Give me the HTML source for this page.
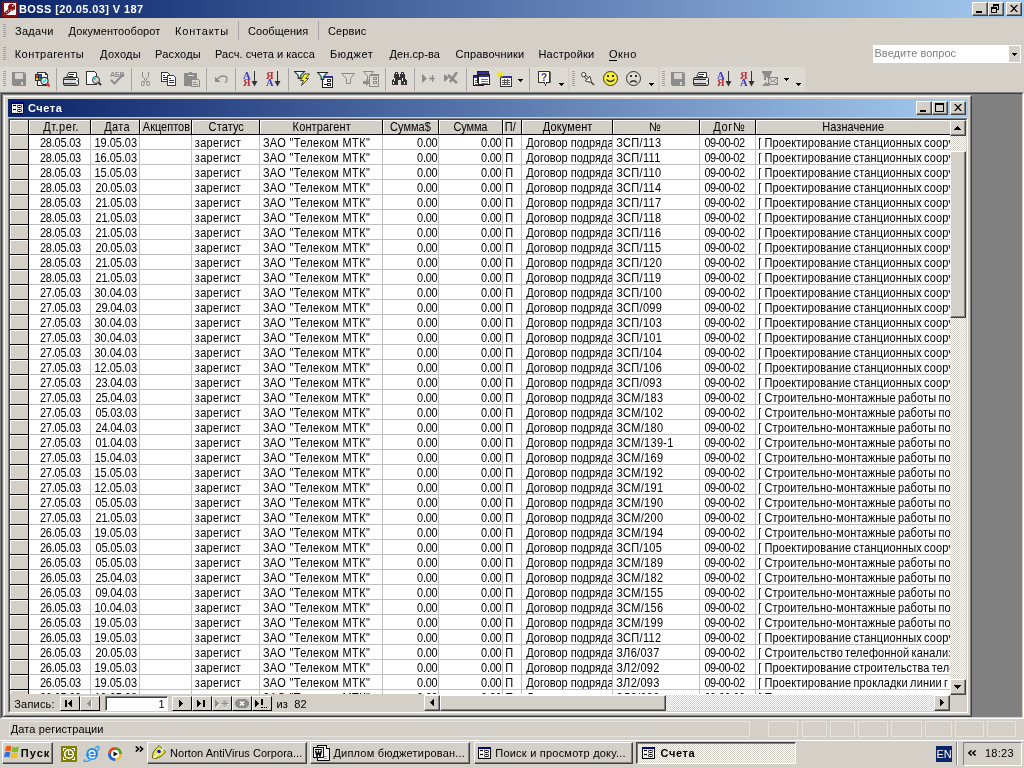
<!DOCTYPE html>
<html><head><meta charset="utf-8"><title>BOSS</title>
<style>
*{box-sizing:border-box}
html,body{margin:0;padding:0}
body{will-change:transform;width:1024px;height:768px;overflow:hidden;position:relative;background:#D4D0C8;font-family:"Liberation Sans",sans-serif;font-size:11px;color:#000}
.a{position:absolute}
.t{position:absolute;white-space:pre;line-height:13px}
.tb{background:linear-gradient(to right,#0A246A,#A6CAF0)}
.btn{position:absolute;background:#D4D0C8;border-style:solid;border-width:1px;border-color:#FFF #404040 #404040 #FFF;box-shadow:inset -1px -1px 0 #808080}
.dith{background-color:#D4D0C8;background-image:linear-gradient(45deg,#FFF 25%,transparent 25%,transparent 75%,#FFF 75%),linear-gradient(45deg,#FFF 25%,transparent 25%,transparent 75%,#FFF 75%);background-size:2px 2px;background-position:0 0,1px 1px}
.grip{position:absolute;width:3px;background:repeating-linear-gradient(to bottom,#A0A0A0 0,#A0A0A0 1px,transparent 1px,transparent 2px)}
.sepv{position:absolute;width:1px;background:#A6A6A6}
.sepw{position:absolute;width:2px;border-left:1px solid #808080;border-right:1px solid #FFF}
.tbar{position:absolute;top:67px;height:24px;background:#DDDAD3;border-radius:0 3px 3px 0}
.clip{position:absolute;overflow:hidden}
.hl{position:absolute;background:#FFF}
.bk{position:absolute;background:#000}
.gl{position:absolute;background:#C0C0C0}
.sy{transform:scaleY(1.13);transform-origin:0 3px}
.sy2{transform:scaleY(1.13);transform-origin:0 11px}
</style></head><body>

<div class="a tb" style="left:0;top:0;width:1024px;height:18px"></div>
<svg class="a" style="left:2px;top:1px;" width="16" height="16" viewBox="0 0 16 16" shape-rendering="crispEdges"><defs><pattern id="chk" width="2" height="2" patternUnits="userSpaceOnUse"><rect width="2" height="2" fill="#800000"/><rect width="1" height="1" fill="#9000A0"/><rect x="1" y="1" width="1" height="1" fill="#9000A0"/></pattern></defs><rect x="0" y="0" width="16" height="16" fill="url(#chk)"/><rect x="2" y="2" width="12" height="12" fill="#FFF"/><circle cx="9.6" cy="6.3" r="3.5" fill="url(#chk)" shape-rendering="auto"/><path d="M8.5 8.5L3.5 12.5" stroke="url(#chk)" stroke-width="3.2" stroke-linecap="round" shape-rendering="auto"/><path d="M4 12L7.5 9.3M8.5 9H11.5" stroke="#FFF" stroke-width="0.9" stroke-dasharray="1.5 1" shape-rendering="auto"/><rect x="10" y="4" width="1.5" height="1.5" fill="#FFF" shape-rendering="auto"/></svg>
<div class="t" style="left:19.00px;top:3px;line-height:13px;color:#FFF;font-weight:bold;letter-spacing:0.400px;">BOSS [20.05.03] V 187</div>
<div class="btn" style="left:972px;top:2px;width:16px;height:14px"></div><div class="a" style="left:976px;top:11px;width:6px;height:2px;background:#000"></div>
<div class="btn" style="left:988px;top:2px;width:16px;height:14px"></div><div class="a" style="left:993px;top:4px;width:6px;height:6px;border:1px solid #000;border-top-width:2px"></div><div class="a" style="left:991px;top:7px;width:6px;height:6px;border:1px solid #000;border-top-width:2px;background:#D4D0C8"></div>
<div class="btn" style="left:1006px;top:2px;width:16px;height:14px"></div><svg class="a" style="left:1010px;top:5px;" width="8" height="7" viewBox="0 0 8 7" shape-rendering="crispEdges"><path d="M0 0H1.6L4 2.6L6.4 0H8L4.8 3.5L8 7H6.4L4 4.4L1.6 7H0L3.2 3.5Z" fill="#000" shape-rendering="auto"/></svg>
<div class="grip" style="left:3px;top:24px;height:14px"></div>
<div class="t" style="left:15.00px;top:25px;line-height:13px;letter-spacing:0.300px;">Задачи</div>
<div class="t" style="left:68.60px;top:25px;line-height:13px;letter-spacing:0.100px;">Документооборот</div>
<div class="t" style="left:175.00px;top:25px;line-height:13px;letter-spacing:0.800px;">Контакты</div>
<div class="t" style="left:248.00px;top:25px;line-height:13px;letter-spacing:0.062px;">Сообщения</div>
<div class="t" style="left:328.00px;top:25px;line-height:13px;letter-spacing:0.120px;">Сервис</div>
<div class="sepv" style="left:238px;top:21px;height:19px"></div>
<div class="sepv" style="left:318px;top:21px;height:19px"></div>
<div class="grip" style="left:3px;top:47px;height:14px"></div>
<div class="t" style="left:14.75px;top:48px;line-height:13px;letter-spacing:0.425px;">Контрагенты</div>
<div class="t" style="left:100.00px;top:48px;line-height:13px;letter-spacing:0.320px;">Доходы</div>
<div class="t" style="left:155.00px;top:48px;line-height:13px;letter-spacing:0.267px;">Расходы</div>
<div class="t" style="left:215.00px;top:48px;line-height:13px;letter-spacing:0.056px;">Расч. счета и касса</div>
<div class="t" style="left:330.00px;top:48px;line-height:13px;letter-spacing:0.600px;">Бюджет</div>
<div class="t" style="left:389.60px;top:48px;line-height:13px;letter-spacing:0.050px;">Ден.ср-ва</div>
<div class="t" style="left:455.60px;top:48px;line-height:13px;letter-spacing:0.200px;">Справочники</div>
<div class="t" style="left:538.40px;top:48px;line-height:13px;letter-spacing:0.237px;">Настройки</div>
<div class="t" style="left:609.00px;top:48px;line-height:13px;letter-spacing:0.567px;">Окно</div>
<div class="a" style="left:609px;top:60px;width:8px;height:1px;background:#000"></div>
<div class="a" style="left:873px;top:45px;width:148px;height:18px;background:#FFF"></div>
<div class="t" style="left:874.50px;top:47px;line-height:13px;color:#808080;letter-spacing:0.038px;">Введите вопрос</div>
<div class="a" style="left:1009px;top:46px;width:11px;height:16px;background:#D4D0C8"></div>
<svg class="a" style="left:1012px;top:53px;" width="5" height="3" viewBox="0 0 5 3" shape-rendering="crispEdges"><path d="M0 0H5V1H4V2H3V3H2V2H1V1H0Z" fill="#000"/></svg>
<div class="tbar" style="left:0;width:568px"></div>
<div class="tbar" style="left:570px;width:88px"></div>
<div class="tbar" style="left:660px;width:145px"></div>
<div class="grip" style="left:3px;top:71px;height:16px"></div>
<div class="grip" style="left:572px;top:71px;height:16px"></div>
<div class="grip" style="left:662px;top:71px;height:16px"></div>
<div class="sepv" style="left:56px;top:68px;height:23px"></div>
<div class="sepv" style="left:131px;top:68px;height:23px"></div>
<div class="sepv" style="left:206px;top:68px;height:23px"></div>
<div class="sepv" style="left:235px;top:68px;height:23px"></div>
<div class="sepv" style="left:288px;top:68px;height:23px"></div>
<div class="sepv" style="left:385px;top:68px;height:23px"></div>
<div class="sepv" style="left:414px;top:68px;height:23px"></div>
<div class="sepv" style="left:466px;top:68px;height:23px"></div>
<div class="sepv" style="left:529px;top:68px;height:23px"></div>
<svg class="a" style="left:12px;top:72px;" width="14" height="14" viewBox="0 0 14 14" shape-rendering="crispEdges"><path d="M0 0H13V1H14V14H1V13H0Z" fill="#8C8C8C"/><rect x="3" y="1" width="8" height="6" fill="#D8D5CE"/><rect x="9" y="10" width="2" height="3" fill="#D8D5CE"/><rect x="12" y="1" width="1" height="1" fill="#D8D5CE"/></svg>
<svg class="a" style="left:34px;top:72px;" width="16" height="15" viewBox="0 0 16 15" shape-rendering="crispEdges"><path d="M3.5 0.5H11.5L13.5 2.5V13.5H3.5Z" fill="#FFF" stroke="#333"/><rect x="11" y="1" width="2" height="2" fill="#333"/><rect x="1" y="2" width="7" height="7" fill="#333"/><rect x="2" y="3" width="2" height="2" fill="#F03030"/><rect x="5" y="3" width="2" height="2" fill="#3050F0"/><rect x="2" y="6" width="2" height="2" fill="#F0F030"/><rect x="5" y="6" width="2" height="2" fill="#30A030"/><circle cx="10.5" cy="9" r="3.6" fill="#E8F8F8" stroke="#333" stroke-width="1.2" shape-rendering="auto"/><path d="M9 10.5L12 7.5" stroke="#20E8F8" stroke-width="2" shape-rendering="auto"/><path d="M13 11.5L15.5 14" stroke="#F03030" stroke-width="2.6" shape-rendering="auto"/></svg>
<svg class="a" style="left:63px;top:72px;" width="16" height="14" viewBox="0 0 16 14" shape-rendering="crispEdges"><path d="M5.5 0.5H13.5V5.5H3.5Z" fill="#FFF" stroke="#333" shape-rendering="auto"/><rect x="6" y="2" width="5" height="1" fill="#333"/><rect x="5" y="4" width="5" height="1" fill="#333"/><rect x="0.5" y="5.5" width="15" height="8" rx="1.5" fill="#A8A8A8" stroke="#333" shape-rendering="auto"/><rect x="1" y="8" width="13" height="3" fill="#E0E0E0"/><rect x="1" y="7" width="13" height="1" fill="#333"/><rect x="1" y="11" width="13" height="1" fill="#333"/><rect x="6" y="9" width="3" height="1" fill="#F0E000"/><rect x="13" y="6" width="2" height="2" fill="#FFF"/><rect x="13" y="10" width="2" height="2" fill="#FFF"/></svg>
<svg class="a" style="left:86px;top:71px;" width="16" height="15" viewBox="0 0 16 15" shape-rendering="crispEdges"><path d="M0.5 0.5H8.5L10.5 2.5V13.5H0.5Z" fill="#FFF" stroke="#333"/><circle cx="10" cy="9" r="3.5" fill="#D8D8D8" stroke="#333" shape-rendering="auto"/><rect x="8" y="7" width="2" height="2" fill="#30E0F0"/><rect x="10" y="10" width="2" height="1" fill="#30E0F0"/><path d="M12.5 11.5L15 14" stroke="#333" stroke-width="2" shape-rendering="auto"/></svg>
<svg class="a" style="left:110px;top:71px;" width="15" height="15" viewBox="0 0 15 15" shape-rendering="crispEdges"><text x="0" y="6" font-family="Liberation Sans" font-size="7" font-weight="bold" fill="#8C8C8C" letter-spacing="-0.3">АБВ</text><path d="M1 9L4.5 12.5L13.5 3" stroke="#8C8C8C" stroke-width="2" fill="none" shape-rendering="auto"/></svg>
<svg class="a" style="left:141px;top:72px;" width="9" height="15" viewBox="0 0 9 15" shape-rendering="crispEdges"><path d="M1.5 0V4L4.5 8.5L7.5 4V0" stroke="#8C8C8C" fill="none"/><ellipse cx="1.8" cy="11.5" rx="1.5" ry="2.2" fill="none" stroke="#8C8C8C" shape-rendering="auto"/><ellipse cx="7.2" cy="11.5" rx="1.5" ry="2.2" fill="none" stroke="#8C8C8C" shape-rendering="auto"/><path d="M4.5 8.5L2.5 10M4.5 8.5L6.5 10" stroke="#8C8C8C"/></svg>
<svg class="a" style="left:161px;top:72px;" width="15" height="14" viewBox="0 0 15 14" shape-rendering="crispEdges"><path d="M0.5 0.5H6.5L8.5 2.5V9.5H0.5Z" fill="#FFF" stroke="#333"/><rect x="2" y="3" width="2" height="1" fill="#333"/><rect x="2" y="5" width="4" height="1" fill="#333"/><rect x="2" y="7" width="4" height="1" fill="#333"/><path d="M6.5 3.5H12.5L14.5 5.5V13.5H6.5Z" fill="#FFF" stroke="#3030A0"/><rect x="8" y="6" width="2" height="1" fill="#333"/><rect x="8" y="8" width="5" height="1" fill="#333"/><rect x="8" y="10" width="5" height="1" fill="#333"/></svg>
<svg class="a" style="left:184px;top:72px;" width="16" height="15" viewBox="0 0 16 15" shape-rendering="crispEdges"><rect x="0" y="1" width="13" height="13" rx="1" fill="#8C8C8C"/><rect x="5" y="0" width="3" height="2" fill="#8C8C8C"/><rect x="4" y="3" width="6" height="1" fill="#E0DDD6"/><path d="M7.5 7.5H14.5L15.5 8.5V14.5H7.5Z" fill="#D8D5CE" stroke="#8C8C8C"/><rect x="9" y="10" width="3" height="1" fill="#8C8C8C"/><rect x="9" y="12" width="5" height="1" fill="#8C8C8C"/></svg>
<svg class="a" style="left:215px;top:75px;" width="13" height="8" viewBox="0 0 13 8" shape-rendering="crispEdges"><path d="M0 2V7H5Z" fill="#8C8C8C"/><path d="M2.5 4.5C4 2 6 1 8.5 1C11 1 12 3 12 4.5C12 6 11 7 10 7.5" stroke="#8C8C8C" stroke-width="1.3" fill="none" shape-rendering="auto"/></svg>
<svg class="a" style="left:243px;top:71px;" width="15" height="16" viewBox="0 0 15 16" shape-rendering="crispEdges"><text x="3.8" y="7.6" text-anchor="middle" font-family="Liberation Serif" font-size="10.5" font-weight="bold" fill="#3838C0" shape-rendering="auto">A</text><text x="3.8" y="15.2" text-anchor="middle" font-family="Liberation Serif" font-size="10.5" font-weight="bold" fill="#B83030" shape-rendering="auto">Я</text><rect x="11" y="0" width="1" height="12" fill="#333"/><path d="M8.5 10H14.5L11.5 15.5Z" fill="#333" shape-rendering="auto"/></svg>
<svg class="a" style="left:266px;top:71px;" width="15" height="16" viewBox="0 0 15 16" shape-rendering="crispEdges"><text x="3.8" y="7.6" text-anchor="middle" font-family="Liberation Serif" font-size="10.5" font-weight="bold" fill="#B83030" shape-rendering="auto">Я</text><text x="3.8" y="15.2" text-anchor="middle" font-family="Liberation Serif" font-size="10.5" font-weight="bold" fill="#3838C0" shape-rendering="auto">A</text><rect x="11" y="0" width="1" height="12" fill="#333"/><path d="M8.5 10H14.5L11.5 15.5Z" fill="#333" shape-rendering="auto"/></svg>
<svg class="a" style="left:294px;top:71px;" width="16" height="16" viewBox="0 0 16 16" shape-rendering="crispEdges"><path d="M0.5 0.5H10.5L6.8 4.5V7.5H4.2V4.5Z" fill="#FFF" stroke="#222" stroke-width="1.1" shape-rendering="auto"/><path d="M2 1.3L4.6 4.3M9 1.3L6.4 4.3M5.5 5.5V7" stroke="#28B0B0" stroke-width="1" shape-rendering="auto"/><path d="M10.5 3H15.5L11.5 7.5H14.5L7.5 14.5L9.5 9.5H6.5Z" fill="#F8F020" stroke="#222" stroke-width="0.8" shape-rendering="auto"/></svg>
<svg class="a" style="left:317px;top:72px;" width="17" height="17" viewBox="0 0 17 17" shape-rendering="crispEdges"><rect x="5.5" y="4.5" width="10" height="11" fill="#FFF" stroke="#222"/><rect x="5" y="4" width="11" height="2" fill="#3030A0"/><rect x="10.5" y="7.5" width="3" height="2" fill="none" stroke="#222"/><rect x="10.5" y="11.5" width="3" height="2" fill="none" stroke="#222"/><rect x="7" y="12" width="3" height="1" fill="#222"/><path d="M0.5 0.5H10.5L6.8 4.5V7.5H4.2V4.5Z" fill="#FFF" stroke="#222" stroke-width="1.1" shape-rendering="auto"/><path d="M2 1.3L4.6 4.3M9 1.3L6.4 4.3M5.5 5.5V7" stroke="#28B0B0" stroke-width="1" shape-rendering="auto"/></svg>
<svg class="a" style="left:341px;top:73px;" width="15" height="12" viewBox="0 0 15 12" shape-rendering="crispEdges"><path d="M0.5 0.5H13.5L9.5 5.5V10.5H5.5V5.5Z" fill="none" stroke="#8C8C8C" stroke-width="1" shape-rendering="auto"/></svg>
<svg class="a" style="left:363px;top:71px;" width="17" height="17" viewBox="0 0 17 17" shape-rendering="crispEdges"><rect x="6.5" y="3.5" width="9" height="12" fill="none" stroke="#8C8C8C"/><rect x="7" y="3" width="9" height="2" fill="#8C8C8C"/><rect x="10.5" y="6.5" width="3" height="2" fill="none" stroke="#8C8C8C"/><rect x="10.5" y="10.5" width="3" height="2" fill="none" stroke="#8C8C8C"/><path d="M0.5 0.5H10.5L6.5 5V9H4.5V5Z" fill="#DDDAD3" stroke="#8C8C8C" shape-rendering="auto"/><path d="M0 10H3V8L7 11.5L3 15V13H0Z" fill="#8C8C8C" shape-rendering="auto"/></svg>
<svg class="a" style="left:392px;top:72px;" width="15" height="14" viewBox="0 0 15 14" shape-rendering="crispEdges"><rect x="3" y="0" width="3" height="2" fill="#333"/><rect x="9" y="0" width="3" height="2" fill="#333"/><path d="M2 2H7V5H8V2H13V6L15 9V13H9V8H6V13H0V9L2 6Z" fill="#333"/><rect x="4" y="1" width="1" height="1" fill="#FFF"/><rect x="10" y="1" width="1" height="1" fill="#FFF"/><rect x="2" y="6" width="1" height="3" fill="#FFF"/><rect x="10" y="6" width="1" height="3" fill="#FFF"/><rect x="1" y="10" width="1" height="2" fill="#FFF"/><rect x="12" y="10" width="1" height="2" fill="#FFF"/></svg>
<svg class="a" style="left:422px;top:74px;" width="14" height="10" viewBox="0 0 14 10" shape-rendering="crispEdges"><path d="M0 0L5 4.5L0 9Z" fill="#8C8C8C" shape-rendering="auto"/><path d="M10 1V8M7 4.5H13" stroke="#8C8C8C" stroke-width="1"/><path d="M8 2.5L12 6.5M12 2.5L8 6.5" stroke="#8C8C8C" stroke-width="1" shape-rendering="auto"/></svg>
<svg class="a" style="left:444px;top:72px;" width="15" height="12" viewBox="0 0 15 12" shape-rendering="crispEdges"><path d="M0 2L5 6L0 10Z" fill="#8C8C8C" shape-rendering="auto"/><path d="M4 3L13 11M13 0L6 10" stroke="#8C8C8C" stroke-width="2.5" shape-rendering="auto"/></svg>
<svg class="a" style="left:473px;top:71px;" width="17" height="15" viewBox="0 0 17 15" shape-rendering="crispEdges"><rect x="0.5" y="4.5" width="10" height="10" fill="#FFF" stroke="#222"/><rect x="1" y="5" width="9" height="2" fill="#3030A0"/><path d="M2 9H5M2 11H5M2 13H5" stroke="#666"/><rect x="4.5" y="0.5" width="11" height="11" fill="#FFF" stroke="#222"/><rect x="5" y="1" width="10" height="2" fill="#3030A0"/><rect x="5.5" y="3.5" width="11" height="10" fill="#FFF" stroke="#222"/><rect x="6" y="4" width="10" height="2" fill="#3030A0"/><path d="M8 8H15M8 10H15M8 12H15" stroke="#777"/></svg>
<svg class="a" style="left:496px;top:71px;" width="16" height="16" viewBox="0 0 16 16" shape-rendering="crispEdges"><rect x="4.5" y="5.5" width="11" height="10" fill="#FFF" stroke="#333"/><rect x="5" y="5" width="11" height="2" fill="#3030A0"/><path d="M6 9H14M6 11H14M6 13H14M8.5 8V14M11.5 8V14" stroke="#555"/><path d="M4 0V7M0.5 3.5H7.5M1.5 1L6.5 6M6.5 1L1.5 6" stroke="#F0E020" shape-rendering="auto"/><rect x="0" y="8" width="1" height="1" fill="#F0E020"/><rect x="7" y="0" width="1" height="1" fill="#F0E020"/></svg>
<svg class="a" style="left:518px;top:79px;" width="5" height="3" viewBox="0 0 5 3" shape-rendering="crispEdges"><path d="M0 0H5V1H4V2H3V3H2V2H1V1H0Z" fill="#000"/></svg>
<svg class="a" style="left:538px;top:71px;" width="13" height="15" viewBox="0 0 13 15" shape-rendering="crispEdges"><path d="M0.5 0.5H11.5V11.5H8.5L7.5 14L6 11.5H0.5Z" fill="#FFFFF0" stroke="#333"/><path d="M1 1H11V11H1Z" fill="#FFFDE0"/><path d="M2 2h1v1h-1zM5 2h1v1h-1zM8 4h1v1h-1zM2 6h1v1h-1zM9 8h1v1h-1zM3 9h1v1h-1z" fill="#F0E040"/><text x="6" y="9.5" text-anchor="middle" font-family="Liberation Sans" font-size="10" font-weight="bold" fill="#3030B0">?</text><path d="M12 1V12" stroke="#666"/></svg>
<svg class="a" style="left:559px;top:83px;" width="5" height="3" viewBox="0 0 5 3" shape-rendering="crispEdges"><path d="M0 0H5V1H4V2H3V3H2V2H1V1H0Z" fill="#000"/></svg>
<svg class="a" style="left:581px;top:72px;" width="14" height="14" viewBox="0 0 14 14" shape-rendering="crispEdges"><path d="M8.5 8.5L13 13" stroke="#333" stroke-width="1.2" shape-rendering="auto"/><path d="M4.2 8.8L8.8 4.2L10.3 9.2L9.2 10.3Z" fill="#FFF" stroke="#333" stroke-width="1" shape-rendering="auto"/><path d="M3.5 5L5 3.5L7.5 6L6 7.5Z" fill="#FFF" stroke="#333" stroke-width="1" shape-rendering="auto"/><circle cx="2.6" cy="2.6" r="2.1" fill="#FFF" stroke="#333" stroke-width="1" shape-rendering="auto"/></svg>
<svg class="a" style="left:603px;top:71px;" width="16" height="16" viewBox="0 0 16 16" shape-rendering="crispEdges"><circle cx="7.5" cy="7.5" r="7" fill="#F8F030" stroke="#333" shape-rendering="auto"/><rect x="4" y="4" width="2" height="2" fill="#333"/><rect x="9" y="4" width="2" height="2" fill="#333"/><path d="M3.5 8.5Q7.5 12.5 11.5 8.5" stroke="#333" fill="none" stroke-width="1.2" shape-rendering="auto"/></svg>
<svg class="a" style="left:626px;top:71px;" width="16" height="16" viewBox="0 0 16 16" shape-rendering="crispEdges"><circle cx="7.5" cy="7.5" r="7" fill="none" stroke="#333" shape-rendering="auto"/><rect x="4" y="4" width="2" height="2" fill="#333"/><rect x="9" y="4" width="2" height="2" fill="#333"/><path d="M4 11.5Q7.5 8 11 11.5" stroke="#333" fill="none" stroke-width="1.2" shape-rendering="auto"/></svg>
<svg class="a" style="left:649px;top:83px;" width="5" height="3" viewBox="0 0 5 3" shape-rendering="crispEdges"><path d="M0 0H5V1H4V2H3V3H2V2H1V1H0Z" fill="#000"/></svg>
<svg class="a" style="left:671px;top:72px;" width="14" height="14" viewBox="0 0 14 14" shape-rendering="crispEdges"><path d="M0 0H13V1H14V14H1V13H0Z" fill="#8C8C8C"/><rect x="3" y="1" width="8" height="6" fill="#D8D5CE"/><rect x="9" y="10" width="2" height="3" fill="#D8D5CE"/><rect x="12" y="1" width="1" height="1" fill="#D8D5CE"/></svg>
<svg class="a" style="left:693px;top:72px;" width="16" height="14" viewBox="0 0 16 14" shape-rendering="crispEdges"><path d="M5.5 0.5H13.5V5.5H3.5Z" fill="#FFF" stroke="#333" shape-rendering="auto"/><rect x="6" y="2" width="5" height="1" fill="#333"/><rect x="5" y="4" width="5" height="1" fill="#333"/><rect x="0.5" y="5.5" width="15" height="8" rx="1.5" fill="#A8A8A8" stroke="#333" shape-rendering="auto"/><rect x="1" y="8" width="13" height="3" fill="#E0E0E0"/><rect x="1" y="7" width="13" height="1" fill="#333"/><rect x="1" y="11" width="13" height="1" fill="#333"/><rect x="6" y="9" width="3" height="1" fill="#F0E000"/><rect x="13" y="6" width="2" height="2" fill="#FFF"/><rect x="13" y="10" width="2" height="2" fill="#FFF"/></svg>
<svg class="a" style="left:717px;top:71px;" width="15" height="16" viewBox="0 0 15 16" shape-rendering="crispEdges"><text x="3.8" y="7.6" text-anchor="middle" font-family="Liberation Serif" font-size="10.5" font-weight="bold" fill="#3838C0" shape-rendering="auto">A</text><text x="3.8" y="15.2" text-anchor="middle" font-family="Liberation Serif" font-size="10.5" font-weight="bold" fill="#B83030" shape-rendering="auto">Я</text><rect x="11" y="0" width="1" height="12" fill="#333"/><path d="M8.5 10H14.5L11.5 15.5Z" fill="#333" shape-rendering="auto"/></svg>
<svg class="a" style="left:740px;top:71px;" width="15" height="16" viewBox="0 0 15 16" shape-rendering="crispEdges"><text x="3.8" y="7.6" text-anchor="middle" font-family="Liberation Serif" font-size="10.5" font-weight="bold" fill="#B83030" shape-rendering="auto">Я</text><text x="3.8" y="15.2" text-anchor="middle" font-family="Liberation Serif" font-size="10.5" font-weight="bold" fill="#3838C0" shape-rendering="auto">A</text><rect x="11" y="0" width="1" height="12" fill="#333"/><path d="M8.5 10H14.5L11.5 15.5Z" fill="#333" shape-rendering="auto"/></svg>
<svg class="a" style="left:762px;top:71px;" width="16" height="16" viewBox="0 0 16 16" shape-rendering="crispEdges"><path d="M0 0H10V2H9L7.5 9H6L5 4L4 9H2.5L1 2H0Z" fill="#8C8C8C"/><rect x="6.5" y="6.5" width="9" height="7" fill="#D8D5CE" stroke="#8C8C8C"/><path d="M7 7L11 10.5L15 7M7 13L10 10M15 13L12 10" stroke="#8C8C8C" fill="none" shape-rendering="auto"/><path d="M0 15L4 11L8 15Z" fill="#8C8C8C" shape-rendering="auto"/></svg>
<svg class="a" style="left:784px;top:78px;" width="5" height="3" viewBox="0 0 5 3" shape-rendering="crispEdges"><path d="M0 0H5V1H4V2H3V3H2V2H1V1H0Z" fill="#000"/></svg>
<svg class="a" style="left:796px;top:83px;" width="5" height="3" viewBox="0 0 5 3" shape-rendering="crispEdges"><path d="M0 0H5V1H4V2H3V3H2V2H1V1H0Z" fill="#000"/></svg>
<div class="a" style="left:0;top:92px;width:1024px;height:627px;background:#808080;border-style:solid;border-width:1px;border-color:#808080 #FFF #FFF #808080"></div>
<div class="a" style="left:1px;top:93px;width:1022px;height:625px;border-style:solid;border-width:1px;border-color:#404040 #D4D0C8 #D4D0C8 #404040"></div>
<div class="a" style="left:3px;top:95px;width:969px;height:622px;background:#D4D0C8;border-style:solid;border-width:1px;border-color:#D4D0C8 #404040 #404040 #D4D0C8"></div>
<div class="a" style="left:4px;top:96px;width:967px;height:620px;border-style:solid;border-width:1px;border-color:#FFF #808080 #808080 #FFF"></div>
<div class="a tb" style="left:8px;top:99px;width:960px;height:18px"></div>
<svg class="a" style="left:11px;top:102px;" width="13" height="12" viewBox="0 0 13 12" shape-rendering="crispEdges"><defs><pattern id="fi1" width="2" height="2" patternUnits="userSpaceOnUse"><rect width="2" height="2" fill="#FFF"/><rect width="1" height="1" fill="#C8C8C8"/></pattern></defs><rect x="0" y="0" width="13" height="12" fill="#000"/><rect x="0" y="0" width="13" height="2" fill="#000080"/><rect x="1" y="2" width="11" height="9" fill="url(#fi1)"/><rect x="2" y="3" width="3" height="1" fill="#000"/><rect x="2" y="7" width="3" height="1" fill="#000"/><rect x="6.5" y="3.5" width="4" height="2" rx="0.8" fill="#FFF" stroke="#000" shape-rendering="auto"/><rect x="6.5" y="7.5" width="4" height="2" rx="0.8" fill="#FFF" stroke="#000" shape-rendering="auto"/></svg>
<div class="t" style="left:27.90px;top:102px;line-height:13px;color:#FFF;font-weight:bold;letter-spacing:0.550px;">Счета</div>
<div class="btn" style="left:916px;top:101px;width:16px;height:14px"></div><div class="a" style="left:920px;top:110px;width:6px;height:2px;background:#000"></div>
<div class="btn" style="left:932px;top:101px;width:16px;height:14px"></div><div class="a" style="left:935px;top:103px;width:9px;height:9px;border:1px solid #000;border-top-width:2px"></div>
<div class="btn" style="left:950px;top:101px;width:16px;height:14px"></div><svg class="a" style="left:954px;top:104px;" width="8" height="7" viewBox="0 0 8 7" shape-rendering="crispEdges"><path d="M0 0H1.6L4 2.6L6.4 0H8L4.8 3.5L8 7H6.4L4 4.4L1.6 7H0L3.2 3.5Z" fill="#000" shape-rendering="auto"/></svg>
<div class="a" style="left:8px;top:118px;width:960px;height:595px;background:#FFF;border-style:solid;border-width:1px;border-color:#808080 #FFF #FFF #808080"></div>
<div class="a" style="left:9px;top:119px;width:958px;height:593px;border-style:solid;border-width:1px;border-color:#404040 #D4D0C8 #D4D0C8 #404040"></div>
<div class="a" style="left:10px;top:120px;width:940px;height:14px;background:#D4D0C8"></div>
<div class="a" style="left:10px;top:120px;width:19px;height:574px;background:#D4D0C8"></div>
<div class="hl" style="left:29px;top:120px;width:61px;height:1px"></div>
<div class="hl" style="left:29px;top:120px;width:1px;height:14px"></div>
<div class="clip" style="left:30px;top:120px;width:60px;height:14px">
<div class="t sy2" style="left:13.20px;top:0px;line-height:14px;letter-spacing:0.533px;">Дт.рег.</div>
</div>
<div class="hl" style="left:91px;top:120px;width:48px;height:1px"></div>
<div class="hl" style="left:91px;top:120px;width:1px;height:14px"></div>
<div class="clip" style="left:92px;top:120px;width:47px;height:14px">
<div class="t sy2" style="left:12.20px;top:0px;line-height:14px;letter-spacing:0.333px;">Дата</div>
</div>
<div class="hl" style="left:140px;top:120px;width:51px;height:1px"></div>
<div class="hl" style="left:140px;top:120px;width:1px;height:14px"></div>
<div class="clip" style="left:141px;top:120px;width:50px;height:14px">
<div class="t sy2" style="left:1.80px;top:0px;line-height:14px;">Акцептов</div>
</div>
<div class="hl" style="left:192px;top:120px;width:67px;height:1px"></div>
<div class="hl" style="left:192px;top:120px;width:1px;height:14px"></div>
<div class="clip" style="left:193px;top:120px;width:66px;height:14px">
<div class="t sy2" style="left:15.60px;top:0px;line-height:14px;letter-spacing:0.100px;">Статус</div>
</div>
<div class="hl" style="left:260px;top:120px;width:122px;height:1px"></div>
<div class="hl" style="left:260px;top:120px;width:1px;height:14px"></div>
<div class="clip" style="left:261px;top:120px;width:121px;height:14px">
<div class="t sy2" style="left:31.60px;top:0px;line-height:14px;letter-spacing:0.133px;">Контрагент</div>
</div>
<div class="hl" style="left:383px;top:120px;width:55px;height:1px"></div>
<div class="hl" style="left:383px;top:120px;width:1px;height:14px"></div>
<div class="clip" style="left:384px;top:120px;width:54px;height:14px">
<div class="t sy2" style="left:6.10px;top:0px;line-height:14px;letter-spacing:0.020px;">Сумма$</div>
</div>
<div class="hl" style="left:439px;top:120px;width:63px;height:1px"></div>
<div class="hl" style="left:439px;top:120px;width:1px;height:14px"></div>
<div class="clip" style="left:440px;top:120px;width:62px;height:14px">
<div class="t sy2" style="left:13.40px;top:0px;line-height:14px;letter-spacing:-0.125px;">Сумма</div>
</div>
<div class="hl" style="left:503px;top:120px;width:18px;height:1px"></div>
<div class="hl" style="left:503px;top:120px;width:1px;height:14px"></div>
<div class="clip" style="left:504px;top:120px;width:17px;height:14px">
<div class="t sy2" style="left:0.80px;top:0px;line-height:14px;">П/</div>
</div>
<div class="hl" style="left:522px;top:120px;width:90px;height:1px"></div>
<div class="hl" style="left:522px;top:120px;width:1px;height:14px"></div>
<div class="clip" style="left:523px;top:120px;width:89px;height:14px">
<div class="t sy2" style="left:19.70px;top:0px;line-height:14px;letter-spacing:0.129px;">Документ</div>
</div>
<div class="hl" style="left:613px;top:120px;width:86px;height:1px"></div>
<div class="hl" style="left:613px;top:120px;width:1px;height:14px"></div>
<div class="clip" style="left:614px;top:120px;width:85px;height:14px">
<div class="t sy2" style="left:35.00px;top:0px;line-height:14px;">№</div>
</div>
<div class="hl" style="left:700px;top:120px;width:55px;height:1px"></div>
<div class="hl" style="left:700px;top:120px;width:1px;height:14px"></div>
<div class="clip" style="left:701px;top:120px;width:54px;height:14px">
<div class="t sy2" style="left:12.30px;top:0px;line-height:14px;letter-spacing:0.667px;">Дог№</div>
</div>
<div class="hl" style="left:756px;top:120px;width:194px;height:1px"></div>
<div class="hl" style="left:756px;top:120px;width:1px;height:14px"></div>
<div class="clip" style="left:757px;top:120px;width:193px;height:14px">
<div class="t sy2" style="left:65.30px;top:0px;line-height:14px;letter-spacing:0.067px;">Назначение</div>
</div>
<div class="hl" style="left:10px;top:120px;width:18px;height:1px"></div>
<div class="hl" style="left:10px;top:120px;width:1px;height:14px"></div>
<div class="bk" style="left:28px;top:120px;width:1px;height:15px"></div>
<div class="bk" style="left:90px;top:120px;width:1px;height:15px"></div>
<div class="bk" style="left:139px;top:120px;width:1px;height:15px"></div>
<div class="bk" style="left:191px;top:120px;width:1px;height:15px"></div>
<div class="bk" style="left:259px;top:120px;width:1px;height:15px"></div>
<div class="bk" style="left:382px;top:120px;width:1px;height:15px"></div>
<div class="bk" style="left:438px;top:120px;width:1px;height:15px"></div>
<div class="bk" style="left:502px;top:120px;width:1px;height:15px"></div>
<div class="bk" style="left:521px;top:120px;width:1px;height:15px"></div>
<div class="bk" style="left:612px;top:120px;width:1px;height:15px"></div>
<div class="bk" style="left:699px;top:120px;width:1px;height:15px"></div>
<div class="bk" style="left:755px;top:120px;width:1px;height:15px"></div>
<div class="bk" style="left:10px;top:134px;width:940px;height:1px"></div>
<div class="clip" style="left:0;top:0;width:1024px;height:694px">
<div class="gl" style="left:29px;top:149px;width:921px;height:1px"></div>
<div class="hl" style="left:10px;top:135px;width:18px;height:1px"></div>
<div class="hl" style="left:10px;top:135px;width:1px;height:14px"></div>
<div class="bk" style="left:10px;top:149px;width:19px;height:1px"></div>
<div class="clip" style="left:29px;top:135px;width:61px;height:14px">
<div class="t sy" style="left:10.90px;top:0px;line-height:14px;letter-spacing:-0.214px;">28.05.03</div>
</div>
<div class="clip" style="left:91px;top:135px;width:48px;height:14px">
<div class="t sy" style="left:3.50px;top:0px;line-height:14px;letter-spacing:-0.043px;">19.05.03</div>
</div>
<div class="clip" style="left:192px;top:135px;width:67px;height:14px">
<div class="t sy" style="left:2.80px;top:0px;line-height:14px;letter-spacing:0.286px;">зарегист</div>
</div>
<div class="clip" style="left:260px;top:135px;width:122px;height:14px">
<div class="t sy" style="left:2.90px;top:0px;line-height:14px;letter-spacing:0.338px;">ЗАО "Телеком МТК"</div>
</div>
<div class="clip" style="left:383px;top:135px;width:55px;height:14px">
<div class="t sy" style="left:34.00px;top:0px;line-height:14px;letter-spacing:-0.233px;">0.00</div>
</div>
<div class="clip" style="left:439px;top:135px;width:63px;height:14px">
<div class="t sy" style="left:42.00px;top:0px;line-height:14px;letter-spacing:-0.233px;">0.00</div>
</div>
<div class="clip" style="left:503px;top:135px;width:18px;height:14px">
<div class="t sy" style="left:2.30px;top:0px;line-height:14px;">П</div>
</div>
<div class="clip" style="left:522px;top:135px;width:90px;height:14px">
<div class="t sy" style="left:4.20px;top:0px;line-height:14px;letter-spacing:0.000px;">Договор подряда</div>
</div>
<div class="clip" style="left:613px;top:135px;width:86px;height:14px">
<div class="t sy" style="left:3.30px;top:0px;line-height:14px;letter-spacing:0.3px;">ЗСП/113</div>
</div>
<div class="clip" style="left:700px;top:135px;width:55px;height:14px">
<div class="t sy" style="left:4.40px;top:0px;line-height:14px;letter-spacing:-0.486px;">09-00-02</div>
</div>
<div class="clip" style="left:756px;top:135px;width:194px;height:14px">
<div class="t sy" style="left:2.20px;top:0px;line-height:14px;letter-spacing:0.15px;word-spacing:-1px;">[</div>
</div>
<div class="clip" style="left:756px;top:135px;width:194px;height:14px">
<div class="t sy" style="left:8.40px;top:0px;line-height:14px;letter-spacing:0.15px;word-spacing:-1px;">Проектирование станционных сооружений</div>
</div>
<div class="gl" style="left:29px;top:164px;width:921px;height:1px"></div>
<div class="hl" style="left:10px;top:150px;width:18px;height:1px"></div>
<div class="hl" style="left:10px;top:150px;width:1px;height:14px"></div>
<div class="bk" style="left:10px;top:164px;width:19px;height:1px"></div>
<div class="clip" style="left:29px;top:150px;width:61px;height:14px">
<div class="t sy" style="left:10.90px;top:0px;line-height:14px;letter-spacing:-0.214px;">28.05.03</div>
</div>
<div class="clip" style="left:91px;top:150px;width:48px;height:14px">
<div class="t sy" style="left:3.50px;top:0px;line-height:14px;letter-spacing:-0.043px;">16.05.03</div>
</div>
<div class="clip" style="left:192px;top:150px;width:67px;height:14px">
<div class="t sy" style="left:2.80px;top:0px;line-height:14px;letter-spacing:0.286px;">зарегист</div>
</div>
<div class="clip" style="left:260px;top:150px;width:122px;height:14px">
<div class="t sy" style="left:2.90px;top:0px;line-height:14px;letter-spacing:0.338px;">ЗАО "Телеком МТК"</div>
</div>
<div class="clip" style="left:383px;top:150px;width:55px;height:14px">
<div class="t sy" style="left:34.00px;top:0px;line-height:14px;letter-spacing:-0.233px;">0.00</div>
</div>
<div class="clip" style="left:439px;top:150px;width:63px;height:14px">
<div class="t sy" style="left:42.00px;top:0px;line-height:14px;letter-spacing:-0.233px;">0.00</div>
</div>
<div class="clip" style="left:503px;top:150px;width:18px;height:14px">
<div class="t sy" style="left:2.30px;top:0px;line-height:14px;">П</div>
</div>
<div class="clip" style="left:522px;top:150px;width:90px;height:14px">
<div class="t sy" style="left:4.20px;top:0px;line-height:14px;letter-spacing:0.000px;">Договор подряда</div>
</div>
<div class="clip" style="left:613px;top:150px;width:86px;height:14px">
<div class="t sy" style="left:3.30px;top:0px;line-height:14px;letter-spacing:0.3px;">ЗСП/111</div>
</div>
<div class="clip" style="left:700px;top:150px;width:55px;height:14px">
<div class="t sy" style="left:4.40px;top:0px;line-height:14px;letter-spacing:-0.486px;">09-00-02</div>
</div>
<div class="clip" style="left:756px;top:150px;width:194px;height:14px">
<div class="t sy" style="left:2.20px;top:0px;line-height:14px;letter-spacing:0.15px;word-spacing:-1px;">[</div>
</div>
<div class="clip" style="left:756px;top:150px;width:194px;height:14px">
<div class="t sy" style="left:8.40px;top:0px;line-height:14px;letter-spacing:0.15px;word-spacing:-1px;">Проектирование станционных сооружений</div>
</div>
<div class="gl" style="left:29px;top:179px;width:921px;height:1px"></div>
<div class="hl" style="left:10px;top:165px;width:18px;height:1px"></div>
<div class="hl" style="left:10px;top:165px;width:1px;height:14px"></div>
<div class="bk" style="left:10px;top:179px;width:19px;height:1px"></div>
<div class="clip" style="left:29px;top:165px;width:61px;height:14px">
<div class="t sy" style="left:10.90px;top:0px;line-height:14px;letter-spacing:-0.214px;">28.05.03</div>
</div>
<div class="clip" style="left:91px;top:165px;width:48px;height:14px">
<div class="t sy" style="left:3.50px;top:0px;line-height:14px;letter-spacing:-0.043px;">15.05.03</div>
</div>
<div class="clip" style="left:192px;top:165px;width:67px;height:14px">
<div class="t sy" style="left:2.80px;top:0px;line-height:14px;letter-spacing:0.286px;">зарегист</div>
</div>
<div class="clip" style="left:260px;top:165px;width:122px;height:14px">
<div class="t sy" style="left:2.90px;top:0px;line-height:14px;letter-spacing:0.338px;">ЗАО "Телеком МТК"</div>
</div>
<div class="clip" style="left:383px;top:165px;width:55px;height:14px">
<div class="t sy" style="left:34.00px;top:0px;line-height:14px;letter-spacing:-0.233px;">0.00</div>
</div>
<div class="clip" style="left:439px;top:165px;width:63px;height:14px">
<div class="t sy" style="left:42.00px;top:0px;line-height:14px;letter-spacing:-0.233px;">0.00</div>
</div>
<div class="clip" style="left:503px;top:165px;width:18px;height:14px">
<div class="t sy" style="left:2.30px;top:0px;line-height:14px;">П</div>
</div>
<div class="clip" style="left:522px;top:165px;width:90px;height:14px">
<div class="t sy" style="left:4.20px;top:0px;line-height:14px;letter-spacing:0.000px;">Договор подряда</div>
</div>
<div class="clip" style="left:613px;top:165px;width:86px;height:14px">
<div class="t sy" style="left:3.30px;top:0px;line-height:14px;letter-spacing:0.3px;">ЗСП/110</div>
</div>
<div class="clip" style="left:700px;top:165px;width:55px;height:14px">
<div class="t sy" style="left:4.40px;top:0px;line-height:14px;letter-spacing:-0.486px;">09-00-02</div>
</div>
<div class="clip" style="left:756px;top:165px;width:194px;height:14px">
<div class="t sy" style="left:2.20px;top:0px;line-height:14px;letter-spacing:0.15px;word-spacing:-1px;">[</div>
</div>
<div class="clip" style="left:756px;top:165px;width:194px;height:14px">
<div class="t sy" style="left:8.40px;top:0px;line-height:14px;letter-spacing:0.15px;word-spacing:-1px;">Проектирование станционных сооружений</div>
</div>
<div class="gl" style="left:29px;top:194px;width:921px;height:1px"></div>
<div class="hl" style="left:10px;top:180px;width:18px;height:1px"></div>
<div class="hl" style="left:10px;top:180px;width:1px;height:14px"></div>
<div class="bk" style="left:10px;top:194px;width:19px;height:1px"></div>
<div class="clip" style="left:29px;top:180px;width:61px;height:14px">
<div class="t sy" style="left:10.90px;top:0px;line-height:14px;letter-spacing:-0.214px;">28.05.03</div>
</div>
<div class="clip" style="left:91px;top:180px;width:48px;height:14px">
<div class="t sy" style="left:4.50px;top:0px;line-height:14px;letter-spacing:-0.186px;">20.05.03</div>
</div>
<div class="clip" style="left:192px;top:180px;width:67px;height:14px">
<div class="t sy" style="left:2.80px;top:0px;line-height:14px;letter-spacing:0.286px;">зарегист</div>
</div>
<div class="clip" style="left:260px;top:180px;width:122px;height:14px">
<div class="t sy" style="left:2.90px;top:0px;line-height:14px;letter-spacing:0.338px;">ЗАО "Телеком МТК"</div>
</div>
<div class="clip" style="left:383px;top:180px;width:55px;height:14px">
<div class="t sy" style="left:34.00px;top:0px;line-height:14px;letter-spacing:-0.233px;">0.00</div>
</div>
<div class="clip" style="left:439px;top:180px;width:63px;height:14px">
<div class="t sy" style="left:42.00px;top:0px;line-height:14px;letter-spacing:-0.233px;">0.00</div>
</div>
<div class="clip" style="left:503px;top:180px;width:18px;height:14px">
<div class="t sy" style="left:2.30px;top:0px;line-height:14px;">П</div>
</div>
<div class="clip" style="left:522px;top:180px;width:90px;height:14px">
<div class="t sy" style="left:4.20px;top:0px;line-height:14px;letter-spacing:0.000px;">Договор подряда</div>
</div>
<div class="clip" style="left:613px;top:180px;width:86px;height:14px">
<div class="t sy" style="left:3.30px;top:0px;line-height:14px;letter-spacing:0.3px;">ЗСП/114</div>
</div>
<div class="clip" style="left:700px;top:180px;width:55px;height:14px">
<div class="t sy" style="left:4.40px;top:0px;line-height:14px;letter-spacing:-0.486px;">09-00-02</div>
</div>
<div class="clip" style="left:756px;top:180px;width:194px;height:14px">
<div class="t sy" style="left:2.20px;top:0px;line-height:14px;letter-spacing:0.15px;word-spacing:-1px;">[</div>
</div>
<div class="clip" style="left:756px;top:180px;width:194px;height:14px">
<div class="t sy" style="left:8.40px;top:0px;line-height:14px;letter-spacing:0.15px;word-spacing:-1px;">Проектирование станционных сооружений</div>
</div>
<div class="gl" style="left:29px;top:209px;width:921px;height:1px"></div>
<div class="hl" style="left:10px;top:195px;width:18px;height:1px"></div>
<div class="hl" style="left:10px;top:195px;width:1px;height:14px"></div>
<div class="bk" style="left:10px;top:209px;width:19px;height:1px"></div>
<div class="clip" style="left:29px;top:195px;width:61px;height:14px">
<div class="t sy" style="left:10.90px;top:0px;line-height:14px;letter-spacing:-0.214px;">28.05.03</div>
</div>
<div class="clip" style="left:91px;top:195px;width:48px;height:14px">
<div class="t sy" style="left:4.50px;top:0px;line-height:14px;letter-spacing:-0.186px;">21.05.03</div>
</div>
<div class="clip" style="left:192px;top:195px;width:67px;height:14px">
<div class="t sy" style="left:2.80px;top:0px;line-height:14px;letter-spacing:0.286px;">зарегист</div>
</div>
<div class="clip" style="left:260px;top:195px;width:122px;height:14px">
<div class="t sy" style="left:2.90px;top:0px;line-height:14px;letter-spacing:0.338px;">ЗАО "Телеком МТК"</div>
</div>
<div class="clip" style="left:383px;top:195px;width:55px;height:14px">
<div class="t sy" style="left:34.00px;top:0px;line-height:14px;letter-spacing:-0.233px;">0.00</div>
</div>
<div class="clip" style="left:439px;top:195px;width:63px;height:14px">
<div class="t sy" style="left:42.00px;top:0px;line-height:14px;letter-spacing:-0.233px;">0.00</div>
</div>
<div class="clip" style="left:503px;top:195px;width:18px;height:14px">
<div class="t sy" style="left:2.30px;top:0px;line-height:14px;">П</div>
</div>
<div class="clip" style="left:522px;top:195px;width:90px;height:14px">
<div class="t sy" style="left:4.20px;top:0px;line-height:14px;letter-spacing:0.000px;">Договор подряда</div>
</div>
<div class="clip" style="left:613px;top:195px;width:86px;height:14px">
<div class="t sy" style="left:3.30px;top:0px;line-height:14px;letter-spacing:0.3px;">ЗСП/117</div>
</div>
<div class="clip" style="left:700px;top:195px;width:55px;height:14px">
<div class="t sy" style="left:4.40px;top:0px;line-height:14px;letter-spacing:-0.486px;">09-00-02</div>
</div>
<div class="clip" style="left:756px;top:195px;width:194px;height:14px">
<div class="t sy" style="left:2.20px;top:0px;line-height:14px;letter-spacing:0.15px;word-spacing:-1px;">[</div>
</div>
<div class="clip" style="left:756px;top:195px;width:194px;height:14px">
<div class="t sy" style="left:8.40px;top:0px;line-height:14px;letter-spacing:0.15px;word-spacing:-1px;">Проектирование станционных сооружений</div>
</div>
<div class="gl" style="left:29px;top:224px;width:921px;height:1px"></div>
<div class="hl" style="left:10px;top:210px;width:18px;height:1px"></div>
<div class="hl" style="left:10px;top:210px;width:1px;height:14px"></div>
<div class="bk" style="left:10px;top:224px;width:19px;height:1px"></div>
<div class="clip" style="left:29px;top:210px;width:61px;height:14px">
<div class="t sy" style="left:10.90px;top:0px;line-height:14px;letter-spacing:-0.214px;">28.05.03</div>
</div>
<div class="clip" style="left:91px;top:210px;width:48px;height:14px">
<div class="t sy" style="left:4.50px;top:0px;line-height:14px;letter-spacing:-0.186px;">21.05.03</div>
</div>
<div class="clip" style="left:192px;top:210px;width:67px;height:14px">
<div class="t sy" style="left:2.80px;top:0px;line-height:14px;letter-spacing:0.286px;">зарегист</div>
</div>
<div class="clip" style="left:260px;top:210px;width:122px;height:14px">
<div class="t sy" style="left:2.90px;top:0px;line-height:14px;letter-spacing:0.338px;">ЗАО "Телеком МТК"</div>
</div>
<div class="clip" style="left:383px;top:210px;width:55px;height:14px">
<div class="t sy" style="left:34.00px;top:0px;line-height:14px;letter-spacing:-0.233px;">0.00</div>
</div>
<div class="clip" style="left:439px;top:210px;width:63px;height:14px">
<div class="t sy" style="left:42.00px;top:0px;line-height:14px;letter-spacing:-0.233px;">0.00</div>
</div>
<div class="clip" style="left:503px;top:210px;width:18px;height:14px">
<div class="t sy" style="left:2.30px;top:0px;line-height:14px;">П</div>
</div>
<div class="clip" style="left:522px;top:210px;width:90px;height:14px">
<div class="t sy" style="left:4.20px;top:0px;line-height:14px;letter-spacing:0.000px;">Договор подряда</div>
</div>
<div class="clip" style="left:613px;top:210px;width:86px;height:14px">
<div class="t sy" style="left:3.30px;top:0px;line-height:14px;letter-spacing:0.3px;">ЗСП/118</div>
</div>
<div class="clip" style="left:700px;top:210px;width:55px;height:14px">
<div class="t sy" style="left:4.40px;top:0px;line-height:14px;letter-spacing:-0.486px;">09-00-02</div>
</div>
<div class="clip" style="left:756px;top:210px;width:194px;height:14px">
<div class="t sy" style="left:2.20px;top:0px;line-height:14px;letter-spacing:0.15px;word-spacing:-1px;">[</div>
</div>
<div class="clip" style="left:756px;top:210px;width:194px;height:14px">
<div class="t sy" style="left:8.40px;top:0px;line-height:14px;letter-spacing:0.15px;word-spacing:-1px;">Проектирование станционных сооружений</div>
</div>
<div class="gl" style="left:29px;top:239px;width:921px;height:1px"></div>
<div class="hl" style="left:10px;top:225px;width:18px;height:1px"></div>
<div class="hl" style="left:10px;top:225px;width:1px;height:14px"></div>
<div class="bk" style="left:10px;top:239px;width:19px;height:1px"></div>
<div class="clip" style="left:29px;top:225px;width:61px;height:14px">
<div class="t sy" style="left:10.90px;top:0px;line-height:14px;letter-spacing:-0.214px;">28.05.03</div>
</div>
<div class="clip" style="left:91px;top:225px;width:48px;height:14px">
<div class="t sy" style="left:4.50px;top:0px;line-height:14px;letter-spacing:-0.186px;">21.05.03</div>
</div>
<div class="clip" style="left:192px;top:225px;width:67px;height:14px">
<div class="t sy" style="left:2.80px;top:0px;line-height:14px;letter-spacing:0.286px;">зарегист</div>
</div>
<div class="clip" style="left:260px;top:225px;width:122px;height:14px">
<div class="t sy" style="left:2.90px;top:0px;line-height:14px;letter-spacing:0.338px;">ЗАО "Телеком МТК"</div>
</div>
<div class="clip" style="left:383px;top:225px;width:55px;height:14px">
<div class="t sy" style="left:34.00px;top:0px;line-height:14px;letter-spacing:-0.233px;">0.00</div>
</div>
<div class="clip" style="left:439px;top:225px;width:63px;height:14px">
<div class="t sy" style="left:42.00px;top:0px;line-height:14px;letter-spacing:-0.233px;">0.00</div>
</div>
<div class="clip" style="left:503px;top:225px;width:18px;height:14px">
<div class="t sy" style="left:2.30px;top:0px;line-height:14px;">П</div>
</div>
<div class="clip" style="left:522px;top:225px;width:90px;height:14px">
<div class="t sy" style="left:4.20px;top:0px;line-height:14px;letter-spacing:0.000px;">Договор подряда</div>
</div>
<div class="clip" style="left:613px;top:225px;width:86px;height:14px">
<div class="t sy" style="left:3.30px;top:0px;line-height:14px;letter-spacing:0.3px;">ЗСП/116</div>
</div>
<div class="clip" style="left:700px;top:225px;width:55px;height:14px">
<div class="t sy" style="left:4.40px;top:0px;line-height:14px;letter-spacing:-0.486px;">09-00-02</div>
</div>
<div class="clip" style="left:756px;top:225px;width:194px;height:14px">
<div class="t sy" style="left:2.20px;top:0px;line-height:14px;letter-spacing:0.15px;word-spacing:-1px;">[</div>
</div>
<div class="clip" style="left:756px;top:225px;width:194px;height:14px">
<div class="t sy" style="left:8.40px;top:0px;line-height:14px;letter-spacing:0.15px;word-spacing:-1px;">Проектирование станционных сооружений</div>
</div>
<div class="gl" style="left:29px;top:254px;width:921px;height:1px"></div>
<div class="hl" style="left:10px;top:240px;width:18px;height:1px"></div>
<div class="hl" style="left:10px;top:240px;width:1px;height:14px"></div>
<div class="bk" style="left:10px;top:254px;width:19px;height:1px"></div>
<div class="clip" style="left:29px;top:240px;width:61px;height:14px">
<div class="t sy" style="left:10.90px;top:0px;line-height:14px;letter-spacing:-0.214px;">28.05.03</div>
</div>
<div class="clip" style="left:91px;top:240px;width:48px;height:14px">
<div class="t sy" style="left:4.50px;top:0px;line-height:14px;letter-spacing:-0.186px;">20.05.03</div>
</div>
<div class="clip" style="left:192px;top:240px;width:67px;height:14px">
<div class="t sy" style="left:2.80px;top:0px;line-height:14px;letter-spacing:0.286px;">зарегист</div>
</div>
<div class="clip" style="left:260px;top:240px;width:122px;height:14px">
<div class="t sy" style="left:2.90px;top:0px;line-height:14px;letter-spacing:0.338px;">ЗАО "Телеком МТК"</div>
</div>
<div class="clip" style="left:383px;top:240px;width:55px;height:14px">
<div class="t sy" style="left:34.00px;top:0px;line-height:14px;letter-spacing:-0.233px;">0.00</div>
</div>
<div class="clip" style="left:439px;top:240px;width:63px;height:14px">
<div class="t sy" style="left:42.00px;top:0px;line-height:14px;letter-spacing:-0.233px;">0.00</div>
</div>
<div class="clip" style="left:503px;top:240px;width:18px;height:14px">
<div class="t sy" style="left:2.30px;top:0px;line-height:14px;">П</div>
</div>
<div class="clip" style="left:522px;top:240px;width:90px;height:14px">
<div class="t sy" style="left:4.20px;top:0px;line-height:14px;letter-spacing:0.000px;">Договор подряда</div>
</div>
<div class="clip" style="left:613px;top:240px;width:86px;height:14px">
<div class="t sy" style="left:3.30px;top:0px;line-height:14px;letter-spacing:0.3px;">ЗСП/115</div>
</div>
<div class="clip" style="left:700px;top:240px;width:55px;height:14px">
<div class="t sy" style="left:4.40px;top:0px;line-height:14px;letter-spacing:-0.486px;">09-00-02</div>
</div>
<div class="clip" style="left:756px;top:240px;width:194px;height:14px">
<div class="t sy" style="left:2.20px;top:0px;line-height:14px;letter-spacing:0.15px;word-spacing:-1px;">[</div>
</div>
<div class="clip" style="left:756px;top:240px;width:194px;height:14px">
<div class="t sy" style="left:8.40px;top:0px;line-height:14px;letter-spacing:0.15px;word-spacing:-1px;">Проектирование станционных сооружений</div>
</div>
<div class="gl" style="left:29px;top:269px;width:921px;height:1px"></div>
<div class="hl" style="left:10px;top:255px;width:18px;height:1px"></div>
<div class="hl" style="left:10px;top:255px;width:1px;height:14px"></div>
<div class="bk" style="left:10px;top:269px;width:19px;height:1px"></div>
<div class="clip" style="left:29px;top:255px;width:61px;height:14px">
<div class="t sy" style="left:10.90px;top:0px;line-height:14px;letter-spacing:-0.214px;">28.05.03</div>
</div>
<div class="clip" style="left:91px;top:255px;width:48px;height:14px">
<div class="t sy" style="left:4.50px;top:0px;line-height:14px;letter-spacing:-0.186px;">21.05.03</div>
</div>
<div class="clip" style="left:192px;top:255px;width:67px;height:14px">
<div class="t sy" style="left:2.80px;top:0px;line-height:14px;letter-spacing:0.286px;">зарегист</div>
</div>
<div class="clip" style="left:260px;top:255px;width:122px;height:14px">
<div class="t sy" style="left:2.90px;top:0px;line-height:14px;letter-spacing:0.338px;">ЗАО "Телеком МТК"</div>
</div>
<div class="clip" style="left:383px;top:255px;width:55px;height:14px">
<div class="t sy" style="left:34.00px;top:0px;line-height:14px;letter-spacing:-0.233px;">0.00</div>
</div>
<div class="clip" style="left:439px;top:255px;width:63px;height:14px">
<div class="t sy" style="left:42.00px;top:0px;line-height:14px;letter-spacing:-0.233px;">0.00</div>
</div>
<div class="clip" style="left:503px;top:255px;width:18px;height:14px">
<div class="t sy" style="left:2.30px;top:0px;line-height:14px;">П</div>
</div>
<div class="clip" style="left:522px;top:255px;width:90px;height:14px">
<div class="t sy" style="left:4.20px;top:0px;line-height:14px;letter-spacing:0.000px;">Договор подряда</div>
</div>
<div class="clip" style="left:613px;top:255px;width:86px;height:14px">
<div class="t sy" style="left:3.30px;top:0px;line-height:14px;letter-spacing:0.3px;">ЗСП/120</div>
</div>
<div class="clip" style="left:700px;top:255px;width:55px;height:14px">
<div class="t sy" style="left:4.40px;top:0px;line-height:14px;letter-spacing:-0.486px;">09-00-02</div>
</div>
<div class="clip" style="left:756px;top:255px;width:194px;height:14px">
<div class="t sy" style="left:2.20px;top:0px;line-height:14px;letter-spacing:0.15px;word-spacing:-1px;">[</div>
</div>
<div class="clip" style="left:756px;top:255px;width:194px;height:14px">
<div class="t sy" style="left:8.40px;top:0px;line-height:14px;letter-spacing:0.15px;word-spacing:-1px;">Проектирование станционных сооружений</div>
</div>
<div class="gl" style="left:29px;top:284px;width:921px;height:1px"></div>
<div class="hl" style="left:10px;top:270px;width:18px;height:1px"></div>
<div class="hl" style="left:10px;top:270px;width:1px;height:14px"></div>
<div class="bk" style="left:10px;top:284px;width:19px;height:1px"></div>
<div class="clip" style="left:29px;top:270px;width:61px;height:14px">
<div class="t sy" style="left:10.90px;top:0px;line-height:14px;letter-spacing:-0.214px;">28.05.03</div>
</div>
<div class="clip" style="left:91px;top:270px;width:48px;height:14px">
<div class="t sy" style="left:4.50px;top:0px;line-height:14px;letter-spacing:-0.186px;">21.05.03</div>
</div>
<div class="clip" style="left:192px;top:270px;width:67px;height:14px">
<div class="t sy" style="left:2.80px;top:0px;line-height:14px;letter-spacing:0.286px;">зарегист</div>
</div>
<div class="clip" style="left:260px;top:270px;width:122px;height:14px">
<div class="t sy" style="left:2.90px;top:0px;line-height:14px;letter-spacing:0.338px;">ЗАО "Телеком МТК"</div>
</div>
<div class="clip" style="left:383px;top:270px;width:55px;height:14px">
<div class="t sy" style="left:34.00px;top:0px;line-height:14px;letter-spacing:-0.233px;">0.00</div>
</div>
<div class="clip" style="left:439px;top:270px;width:63px;height:14px">
<div class="t sy" style="left:42.00px;top:0px;line-height:14px;letter-spacing:-0.233px;">0.00</div>
</div>
<div class="clip" style="left:503px;top:270px;width:18px;height:14px">
<div class="t sy" style="left:2.30px;top:0px;line-height:14px;">П</div>
</div>
<div class="clip" style="left:522px;top:270px;width:90px;height:14px">
<div class="t sy" style="left:4.20px;top:0px;line-height:14px;letter-spacing:0.000px;">Договор подряда</div>
</div>
<div class="clip" style="left:613px;top:270px;width:86px;height:14px">
<div class="t sy" style="left:3.30px;top:0px;line-height:14px;letter-spacing:0.3px;">ЗСП/119</div>
</div>
<div class="clip" style="left:700px;top:270px;width:55px;height:14px">
<div class="t sy" style="left:4.40px;top:0px;line-height:14px;letter-spacing:-0.486px;">09-00-02</div>
</div>
<div class="clip" style="left:756px;top:270px;width:194px;height:14px">
<div class="t sy" style="left:2.20px;top:0px;line-height:14px;letter-spacing:0.15px;word-spacing:-1px;">[</div>
</div>
<div class="clip" style="left:756px;top:270px;width:194px;height:14px">
<div class="t sy" style="left:8.40px;top:0px;line-height:14px;letter-spacing:0.15px;word-spacing:-1px;">Проектирование станционных сооружений</div>
</div>
<div class="gl" style="left:29px;top:299px;width:921px;height:1px"></div>
<div class="hl" style="left:10px;top:285px;width:18px;height:1px"></div>
<div class="hl" style="left:10px;top:285px;width:1px;height:14px"></div>
<div class="bk" style="left:10px;top:299px;width:19px;height:1px"></div>
<div class="clip" style="left:29px;top:285px;width:61px;height:14px">
<div class="t sy" style="left:10.90px;top:0px;line-height:14px;letter-spacing:-0.214px;">27.05.03</div>
</div>
<div class="clip" style="left:91px;top:285px;width:48px;height:14px">
<div class="t sy" style="left:3.50px;top:0px;line-height:14px;letter-spacing:-0.043px;">30.04.03</div>
</div>
<div class="clip" style="left:192px;top:285px;width:67px;height:14px">
<div class="t sy" style="left:2.80px;top:0px;line-height:14px;letter-spacing:0.286px;">зарегист</div>
</div>
<div class="clip" style="left:260px;top:285px;width:122px;height:14px">
<div class="t sy" style="left:2.90px;top:0px;line-height:14px;letter-spacing:0.338px;">ЗАО "Телеком МТК"</div>
</div>
<div class="clip" style="left:383px;top:285px;width:55px;height:14px">
<div class="t sy" style="left:34.00px;top:0px;line-height:14px;letter-spacing:-0.233px;">0.00</div>
</div>
<div class="clip" style="left:439px;top:285px;width:63px;height:14px">
<div class="t sy" style="left:42.00px;top:0px;line-height:14px;letter-spacing:-0.233px;">0.00</div>
</div>
<div class="clip" style="left:503px;top:285px;width:18px;height:14px">
<div class="t sy" style="left:2.30px;top:0px;line-height:14px;">П</div>
</div>
<div class="clip" style="left:522px;top:285px;width:90px;height:14px">
<div class="t sy" style="left:4.20px;top:0px;line-height:14px;letter-spacing:0.000px;">Договор подряда</div>
</div>
<div class="clip" style="left:613px;top:285px;width:86px;height:14px">
<div class="t sy" style="left:3.30px;top:0px;line-height:14px;letter-spacing:0.3px;">ЗСП/100</div>
</div>
<div class="clip" style="left:700px;top:285px;width:55px;height:14px">
<div class="t sy" style="left:4.40px;top:0px;line-height:14px;letter-spacing:-0.486px;">09-00-02</div>
</div>
<div class="clip" style="left:756px;top:285px;width:194px;height:14px">
<div class="t sy" style="left:2.20px;top:0px;line-height:14px;letter-spacing:0.15px;word-spacing:-1px;">[</div>
</div>
<div class="clip" style="left:756px;top:285px;width:194px;height:14px">
<div class="t sy" style="left:8.40px;top:0px;line-height:14px;letter-spacing:0.15px;word-spacing:-1px;">Проектирование станционных сооружений</div>
</div>
<div class="gl" style="left:29px;top:314px;width:921px;height:1px"></div>
<div class="hl" style="left:10px;top:300px;width:18px;height:1px"></div>
<div class="hl" style="left:10px;top:300px;width:1px;height:14px"></div>
<div class="bk" style="left:10px;top:314px;width:19px;height:1px"></div>
<div class="clip" style="left:29px;top:300px;width:61px;height:14px">
<div class="t sy" style="left:10.90px;top:0px;line-height:14px;letter-spacing:-0.214px;">27.05.03</div>
</div>
<div class="clip" style="left:91px;top:300px;width:48px;height:14px">
<div class="t sy" style="left:4.50px;top:0px;line-height:14px;letter-spacing:-0.186px;">29.04.03</div>
</div>
<div class="clip" style="left:192px;top:300px;width:67px;height:14px">
<div class="t sy" style="left:2.80px;top:0px;line-height:14px;letter-spacing:0.286px;">зарегист</div>
</div>
<div class="clip" style="left:260px;top:300px;width:122px;height:14px">
<div class="t sy" style="left:2.90px;top:0px;line-height:14px;letter-spacing:0.338px;">ЗАО "Телеком МТК"</div>
</div>
<div class="clip" style="left:383px;top:300px;width:55px;height:14px">
<div class="t sy" style="left:34.00px;top:0px;line-height:14px;letter-spacing:-0.233px;">0.00</div>
</div>
<div class="clip" style="left:439px;top:300px;width:63px;height:14px">
<div class="t sy" style="left:42.00px;top:0px;line-height:14px;letter-spacing:-0.233px;">0.00</div>
</div>
<div class="clip" style="left:503px;top:300px;width:18px;height:14px">
<div class="t sy" style="left:2.30px;top:0px;line-height:14px;">П</div>
</div>
<div class="clip" style="left:522px;top:300px;width:90px;height:14px">
<div class="t sy" style="left:4.20px;top:0px;line-height:14px;letter-spacing:0.000px;">Договор подряда</div>
</div>
<div class="clip" style="left:613px;top:300px;width:86px;height:14px">
<div class="t sy" style="left:3.30px;top:0px;line-height:14px;letter-spacing:0.3px;">ЗСП/099</div>
</div>
<div class="clip" style="left:700px;top:300px;width:55px;height:14px">
<div class="t sy" style="left:4.40px;top:0px;line-height:14px;letter-spacing:-0.486px;">09-00-02</div>
</div>
<div class="clip" style="left:756px;top:300px;width:194px;height:14px">
<div class="t sy" style="left:2.20px;top:0px;line-height:14px;letter-spacing:0.15px;word-spacing:-1px;">[</div>
</div>
<div class="clip" style="left:756px;top:300px;width:194px;height:14px">
<div class="t sy" style="left:8.40px;top:0px;line-height:14px;letter-spacing:0.15px;word-spacing:-1px;">Проектирование станционных сооружений</div>
</div>
<div class="gl" style="left:29px;top:329px;width:921px;height:1px"></div>
<div class="hl" style="left:10px;top:315px;width:18px;height:1px"></div>
<div class="hl" style="left:10px;top:315px;width:1px;height:14px"></div>
<div class="bk" style="left:10px;top:329px;width:19px;height:1px"></div>
<div class="clip" style="left:29px;top:315px;width:61px;height:14px">
<div class="t sy" style="left:10.90px;top:0px;line-height:14px;letter-spacing:-0.214px;">27.05.03</div>
</div>
<div class="clip" style="left:91px;top:315px;width:48px;height:14px">
<div class="t sy" style="left:3.50px;top:0px;line-height:14px;letter-spacing:-0.043px;">30.04.03</div>
</div>
<div class="clip" style="left:192px;top:315px;width:67px;height:14px">
<div class="t sy" style="left:2.80px;top:0px;line-height:14px;letter-spacing:0.286px;">зарегист</div>
</div>
<div class="clip" style="left:260px;top:315px;width:122px;height:14px">
<div class="t sy" style="left:2.90px;top:0px;line-height:14px;letter-spacing:0.338px;">ЗАО "Телеком МТК"</div>
</div>
<div class="clip" style="left:383px;top:315px;width:55px;height:14px">
<div class="t sy" style="left:34.00px;top:0px;line-height:14px;letter-spacing:-0.233px;">0.00</div>
</div>
<div class="clip" style="left:439px;top:315px;width:63px;height:14px">
<div class="t sy" style="left:42.00px;top:0px;line-height:14px;letter-spacing:-0.233px;">0.00</div>
</div>
<div class="clip" style="left:503px;top:315px;width:18px;height:14px">
<div class="t sy" style="left:2.30px;top:0px;line-height:14px;">П</div>
</div>
<div class="clip" style="left:522px;top:315px;width:90px;height:14px">
<div class="t sy" style="left:4.20px;top:0px;line-height:14px;letter-spacing:0.000px;">Договор подряда</div>
</div>
<div class="clip" style="left:613px;top:315px;width:86px;height:14px">
<div class="t sy" style="left:3.30px;top:0px;line-height:14px;letter-spacing:0.3px;">ЗСП/103</div>
</div>
<div class="clip" style="left:700px;top:315px;width:55px;height:14px">
<div class="t sy" style="left:4.40px;top:0px;line-height:14px;letter-spacing:-0.486px;">09-00-02</div>
</div>
<div class="clip" style="left:756px;top:315px;width:194px;height:14px">
<div class="t sy" style="left:2.20px;top:0px;line-height:14px;letter-spacing:0.15px;word-spacing:-1px;">[</div>
</div>
<div class="clip" style="left:756px;top:315px;width:194px;height:14px">
<div class="t sy" style="left:8.40px;top:0px;line-height:14px;letter-spacing:0.15px;word-spacing:-1px;">Проектирование станционных сооружений</div>
</div>
<div class="gl" style="left:29px;top:344px;width:921px;height:1px"></div>
<div class="hl" style="left:10px;top:330px;width:18px;height:1px"></div>
<div class="hl" style="left:10px;top:330px;width:1px;height:14px"></div>
<div class="bk" style="left:10px;top:344px;width:19px;height:1px"></div>
<div class="clip" style="left:29px;top:330px;width:61px;height:14px">
<div class="t sy" style="left:10.90px;top:0px;line-height:14px;letter-spacing:-0.214px;">27.05.03</div>
</div>
<div class="clip" style="left:91px;top:330px;width:48px;height:14px">
<div class="t sy" style="left:3.50px;top:0px;line-height:14px;letter-spacing:-0.043px;">30.04.03</div>
</div>
<div class="clip" style="left:192px;top:330px;width:67px;height:14px">
<div class="t sy" style="left:2.80px;top:0px;line-height:14px;letter-spacing:0.286px;">зарегист</div>
</div>
<div class="clip" style="left:260px;top:330px;width:122px;height:14px">
<div class="t sy" style="left:2.90px;top:0px;line-height:14px;letter-spacing:0.338px;">ЗАО "Телеком МТК"</div>
</div>
<div class="clip" style="left:383px;top:330px;width:55px;height:14px">
<div class="t sy" style="left:34.00px;top:0px;line-height:14px;letter-spacing:-0.233px;">0.00</div>
</div>
<div class="clip" style="left:439px;top:330px;width:63px;height:14px">
<div class="t sy" style="left:42.00px;top:0px;line-height:14px;letter-spacing:-0.233px;">0.00</div>
</div>
<div class="clip" style="left:503px;top:330px;width:18px;height:14px">
<div class="t sy" style="left:2.30px;top:0px;line-height:14px;">П</div>
</div>
<div class="clip" style="left:522px;top:330px;width:90px;height:14px">
<div class="t sy" style="left:4.20px;top:0px;line-height:14px;letter-spacing:0.000px;">Договор подряда</div>
</div>
<div class="clip" style="left:613px;top:330px;width:86px;height:14px">
<div class="t sy" style="left:3.30px;top:0px;line-height:14px;letter-spacing:0.3px;">ЗСП/101</div>
</div>
<div class="clip" style="left:700px;top:330px;width:55px;height:14px">
<div class="t sy" style="left:4.40px;top:0px;line-height:14px;letter-spacing:-0.486px;">09-00-02</div>
</div>
<div class="clip" style="left:756px;top:330px;width:194px;height:14px">
<div class="t sy" style="left:2.20px;top:0px;line-height:14px;letter-spacing:0.15px;word-spacing:-1px;">[</div>
</div>
<div class="clip" style="left:756px;top:330px;width:194px;height:14px">
<div class="t sy" style="left:8.40px;top:0px;line-height:14px;letter-spacing:0.15px;word-spacing:-1px;">Проектирование станционных сооружений</div>
</div>
<div class="gl" style="left:29px;top:359px;width:921px;height:1px"></div>
<div class="hl" style="left:10px;top:345px;width:18px;height:1px"></div>
<div class="hl" style="left:10px;top:345px;width:1px;height:14px"></div>
<div class="bk" style="left:10px;top:359px;width:19px;height:1px"></div>
<div class="clip" style="left:29px;top:345px;width:61px;height:14px">
<div class="t sy" style="left:10.90px;top:0px;line-height:14px;letter-spacing:-0.214px;">27.05.03</div>
</div>
<div class="clip" style="left:91px;top:345px;width:48px;height:14px">
<div class="t sy" style="left:3.50px;top:0px;line-height:14px;letter-spacing:-0.043px;">30.04.03</div>
</div>
<div class="clip" style="left:192px;top:345px;width:67px;height:14px">
<div class="t sy" style="left:2.80px;top:0px;line-height:14px;letter-spacing:0.286px;">зарегист</div>
</div>
<div class="clip" style="left:260px;top:345px;width:122px;height:14px">
<div class="t sy" style="left:2.90px;top:0px;line-height:14px;letter-spacing:0.338px;">ЗАО "Телеком МТК"</div>
</div>
<div class="clip" style="left:383px;top:345px;width:55px;height:14px">
<div class="t sy" style="left:34.00px;top:0px;line-height:14px;letter-spacing:-0.233px;">0.00</div>
</div>
<div class="clip" style="left:439px;top:345px;width:63px;height:14px">
<div class="t sy" style="left:42.00px;top:0px;line-height:14px;letter-spacing:-0.233px;">0.00</div>
</div>
<div class="clip" style="left:503px;top:345px;width:18px;height:14px">
<div class="t sy" style="left:2.30px;top:0px;line-height:14px;">П</div>
</div>
<div class="clip" style="left:522px;top:345px;width:90px;height:14px">
<div class="t sy" style="left:4.20px;top:0px;line-height:14px;letter-spacing:0.000px;">Договор подряда</div>
</div>
<div class="clip" style="left:613px;top:345px;width:86px;height:14px">
<div class="t sy" style="left:3.30px;top:0px;line-height:14px;letter-spacing:0.3px;">ЗСП/104</div>
</div>
<div class="clip" style="left:700px;top:345px;width:55px;height:14px">
<div class="t sy" style="left:4.40px;top:0px;line-height:14px;letter-spacing:-0.486px;">09-00-02</div>
</div>
<div class="clip" style="left:756px;top:345px;width:194px;height:14px">
<div class="t sy" style="left:2.20px;top:0px;line-height:14px;letter-spacing:0.15px;word-spacing:-1px;">[</div>
</div>
<div class="clip" style="left:756px;top:345px;width:194px;height:14px">
<div class="t sy" style="left:8.40px;top:0px;line-height:14px;letter-spacing:0.15px;word-spacing:-1px;">Проектирование станционных сооружений</div>
</div>
<div class="gl" style="left:29px;top:374px;width:921px;height:1px"></div>
<div class="hl" style="left:10px;top:360px;width:18px;height:1px"></div>
<div class="hl" style="left:10px;top:360px;width:1px;height:14px"></div>
<div class="bk" style="left:10px;top:374px;width:19px;height:1px"></div>
<div class="clip" style="left:29px;top:360px;width:61px;height:14px">
<div class="t sy" style="left:10.90px;top:0px;line-height:14px;letter-spacing:-0.214px;">27.05.03</div>
</div>
<div class="clip" style="left:91px;top:360px;width:48px;height:14px">
<div class="t sy" style="left:3.50px;top:0px;line-height:14px;letter-spacing:-0.043px;">12.05.03</div>
</div>
<div class="clip" style="left:192px;top:360px;width:67px;height:14px">
<div class="t sy" style="left:2.80px;top:0px;line-height:14px;letter-spacing:0.286px;">зарегист</div>
</div>
<div class="clip" style="left:260px;top:360px;width:122px;height:14px">
<div class="t sy" style="left:2.90px;top:0px;line-height:14px;letter-spacing:0.338px;">ЗАО "Телеком МТК"</div>
</div>
<div class="clip" style="left:383px;top:360px;width:55px;height:14px">
<div class="t sy" style="left:34.00px;top:0px;line-height:14px;letter-spacing:-0.233px;">0.00</div>
</div>
<div class="clip" style="left:439px;top:360px;width:63px;height:14px">
<div class="t sy" style="left:42.00px;top:0px;line-height:14px;letter-spacing:-0.233px;">0.00</div>
</div>
<div class="clip" style="left:503px;top:360px;width:18px;height:14px">
<div class="t sy" style="left:2.30px;top:0px;line-height:14px;">П</div>
</div>
<div class="clip" style="left:522px;top:360px;width:90px;height:14px">
<div class="t sy" style="left:4.20px;top:0px;line-height:14px;letter-spacing:0.000px;">Договор подряда</div>
</div>
<div class="clip" style="left:613px;top:360px;width:86px;height:14px">
<div class="t sy" style="left:3.30px;top:0px;line-height:14px;letter-spacing:0.3px;">ЗСП/106</div>
</div>
<div class="clip" style="left:700px;top:360px;width:55px;height:14px">
<div class="t sy" style="left:4.40px;top:0px;line-height:14px;letter-spacing:-0.486px;">09-00-02</div>
</div>
<div class="clip" style="left:756px;top:360px;width:194px;height:14px">
<div class="t sy" style="left:2.20px;top:0px;line-height:14px;letter-spacing:0.15px;word-spacing:-1px;">[</div>
</div>
<div class="clip" style="left:756px;top:360px;width:194px;height:14px">
<div class="t sy" style="left:8.40px;top:0px;line-height:14px;letter-spacing:0.15px;word-spacing:-1px;">Проектирование станционных сооружений</div>
</div>
<div class="gl" style="left:29px;top:389px;width:921px;height:1px"></div>
<div class="hl" style="left:10px;top:375px;width:18px;height:1px"></div>
<div class="hl" style="left:10px;top:375px;width:1px;height:14px"></div>
<div class="bk" style="left:10px;top:389px;width:19px;height:1px"></div>
<div class="clip" style="left:29px;top:375px;width:61px;height:14px">
<div class="t sy" style="left:10.90px;top:0px;line-height:14px;letter-spacing:-0.214px;">27.05.03</div>
</div>
<div class="clip" style="left:91px;top:375px;width:48px;height:14px">
<div class="t sy" style="left:4.50px;top:0px;line-height:14px;letter-spacing:-0.186px;">23.04.03</div>
</div>
<div class="clip" style="left:192px;top:375px;width:67px;height:14px">
<div class="t sy" style="left:2.80px;top:0px;line-height:14px;letter-spacing:0.286px;">зарегист</div>
</div>
<div class="clip" style="left:260px;top:375px;width:122px;height:14px">
<div class="t sy" style="left:2.90px;top:0px;line-height:14px;letter-spacing:0.338px;">ЗАО "Телеком МТК"</div>
</div>
<div class="clip" style="left:383px;top:375px;width:55px;height:14px">
<div class="t sy" style="left:34.00px;top:0px;line-height:14px;letter-spacing:-0.233px;">0.00</div>
</div>
<div class="clip" style="left:439px;top:375px;width:63px;height:14px">
<div class="t sy" style="left:42.00px;top:0px;line-height:14px;letter-spacing:-0.233px;">0.00</div>
</div>
<div class="clip" style="left:503px;top:375px;width:18px;height:14px">
<div class="t sy" style="left:2.30px;top:0px;line-height:14px;">П</div>
</div>
<div class="clip" style="left:522px;top:375px;width:90px;height:14px">
<div class="t sy" style="left:4.20px;top:0px;line-height:14px;letter-spacing:0.000px;">Договор подряда</div>
</div>
<div class="clip" style="left:613px;top:375px;width:86px;height:14px">
<div class="t sy" style="left:3.30px;top:0px;line-height:14px;letter-spacing:0.3px;">ЗСП/093</div>
</div>
<div class="clip" style="left:700px;top:375px;width:55px;height:14px">
<div class="t sy" style="left:4.40px;top:0px;line-height:14px;letter-spacing:-0.486px;">09-00-02</div>
</div>
<div class="clip" style="left:756px;top:375px;width:194px;height:14px">
<div class="t sy" style="left:2.20px;top:0px;line-height:14px;letter-spacing:0.15px;word-spacing:-1px;">[</div>
</div>
<div class="clip" style="left:756px;top:375px;width:194px;height:14px">
<div class="t sy" style="left:8.40px;top:0px;line-height:14px;letter-spacing:0.15px;word-spacing:-1px;">Проектирование станционных сооружений</div>
</div>
<div class="gl" style="left:29px;top:404px;width:921px;height:1px"></div>
<div class="hl" style="left:10px;top:390px;width:18px;height:1px"></div>
<div class="hl" style="left:10px;top:390px;width:1px;height:14px"></div>
<div class="bk" style="left:10px;top:404px;width:19px;height:1px"></div>
<div class="clip" style="left:29px;top:390px;width:61px;height:14px">
<div class="t sy" style="left:10.90px;top:0px;line-height:14px;letter-spacing:-0.214px;">27.05.03</div>
</div>
<div class="clip" style="left:91px;top:390px;width:48px;height:14px">
<div class="t sy" style="left:4.50px;top:0px;line-height:14px;letter-spacing:-0.186px;">25.04.03</div>
</div>
<div class="clip" style="left:192px;top:390px;width:67px;height:14px">
<div class="t sy" style="left:2.80px;top:0px;line-height:14px;letter-spacing:0.286px;">зарегист</div>
</div>
<div class="clip" style="left:260px;top:390px;width:122px;height:14px">
<div class="t sy" style="left:2.90px;top:0px;line-height:14px;letter-spacing:0.338px;">ЗАО "Телеком МТК"</div>
</div>
<div class="clip" style="left:383px;top:390px;width:55px;height:14px">
<div class="t sy" style="left:34.00px;top:0px;line-height:14px;letter-spacing:-0.233px;">0.00</div>
</div>
<div class="clip" style="left:439px;top:390px;width:63px;height:14px">
<div class="t sy" style="left:42.00px;top:0px;line-height:14px;letter-spacing:-0.233px;">0.00</div>
</div>
<div class="clip" style="left:503px;top:390px;width:18px;height:14px">
<div class="t sy" style="left:2.30px;top:0px;line-height:14px;">П</div>
</div>
<div class="clip" style="left:522px;top:390px;width:90px;height:14px">
<div class="t sy" style="left:4.20px;top:0px;line-height:14px;letter-spacing:0.000px;">Договор подряда</div>
</div>
<div class="clip" style="left:613px;top:390px;width:86px;height:14px">
<div class="t sy" style="left:3.30px;top:0px;line-height:14px;letter-spacing:0.3px;">ЗСМ/183</div>
</div>
<div class="clip" style="left:700px;top:390px;width:55px;height:14px">
<div class="t sy" style="left:4.40px;top:0px;line-height:14px;letter-spacing:-0.486px;">09-00-02</div>
</div>
<div class="clip" style="left:756px;top:390px;width:194px;height:14px">
<div class="t sy" style="left:2.20px;top:0px;line-height:14px;letter-spacing:0.15px;word-spacing:-1px;">[</div>
</div>
<div class="clip" style="left:756px;top:390px;width:194px;height:14px">
<div class="t sy" style="left:8.40px;top:0px;line-height:14px;letter-spacing:0.15px;word-spacing:-1px;">Строительно-монтажные работы по объекту</div>
</div>
<div class="gl" style="left:29px;top:419px;width:921px;height:1px"></div>
<div class="hl" style="left:10px;top:405px;width:18px;height:1px"></div>
<div class="hl" style="left:10px;top:405px;width:1px;height:14px"></div>
<div class="bk" style="left:10px;top:419px;width:19px;height:1px"></div>
<div class="clip" style="left:29px;top:405px;width:61px;height:14px">
<div class="t sy" style="left:10.90px;top:0px;line-height:14px;letter-spacing:-0.214px;">27.05.03</div>
</div>
<div class="clip" style="left:91px;top:405px;width:48px;height:14px">
<div class="t sy" style="left:4.50px;top:0px;line-height:14px;letter-spacing:-0.186px;">05.03.03</div>
</div>
<div class="clip" style="left:192px;top:405px;width:67px;height:14px">
<div class="t sy" style="left:2.80px;top:0px;line-height:14px;letter-spacing:0.286px;">зарегист</div>
</div>
<div class="clip" style="left:260px;top:405px;width:122px;height:14px">
<div class="t sy" style="left:2.90px;top:0px;line-height:14px;letter-spacing:0.338px;">ЗАО "Телеком МТК"</div>
</div>
<div class="clip" style="left:383px;top:405px;width:55px;height:14px">
<div class="t sy" style="left:34.00px;top:0px;line-height:14px;letter-spacing:-0.233px;">0.00</div>
</div>
<div class="clip" style="left:439px;top:405px;width:63px;height:14px">
<div class="t sy" style="left:42.00px;top:0px;line-height:14px;letter-spacing:-0.233px;">0.00</div>
</div>
<div class="clip" style="left:503px;top:405px;width:18px;height:14px">
<div class="t sy" style="left:2.30px;top:0px;line-height:14px;">П</div>
</div>
<div class="clip" style="left:522px;top:405px;width:90px;height:14px">
<div class="t sy" style="left:4.20px;top:0px;line-height:14px;letter-spacing:0.000px;">Договор подряда</div>
</div>
<div class="clip" style="left:613px;top:405px;width:86px;height:14px">
<div class="t sy" style="left:3.30px;top:0px;line-height:14px;letter-spacing:0.3px;">ЗСМ/102</div>
</div>
<div class="clip" style="left:700px;top:405px;width:55px;height:14px">
<div class="t sy" style="left:4.40px;top:0px;line-height:14px;letter-spacing:-0.486px;">09-00-02</div>
</div>
<div class="clip" style="left:756px;top:405px;width:194px;height:14px">
<div class="t sy" style="left:2.20px;top:0px;line-height:14px;letter-spacing:0.15px;word-spacing:-1px;">[</div>
</div>
<div class="clip" style="left:756px;top:405px;width:194px;height:14px">
<div class="t sy" style="left:8.40px;top:0px;line-height:14px;letter-spacing:0.15px;word-spacing:-1px;">Строительно-монтажные работы по объекту</div>
</div>
<div class="gl" style="left:29px;top:434px;width:921px;height:1px"></div>
<div class="hl" style="left:10px;top:420px;width:18px;height:1px"></div>
<div class="hl" style="left:10px;top:420px;width:1px;height:14px"></div>
<div class="bk" style="left:10px;top:434px;width:19px;height:1px"></div>
<div class="clip" style="left:29px;top:420px;width:61px;height:14px">
<div class="t sy" style="left:10.90px;top:0px;line-height:14px;letter-spacing:-0.214px;">27.05.03</div>
</div>
<div class="clip" style="left:91px;top:420px;width:48px;height:14px">
<div class="t sy" style="left:4.50px;top:0px;line-height:14px;letter-spacing:-0.186px;">24.04.03</div>
</div>
<div class="clip" style="left:192px;top:420px;width:67px;height:14px">
<div class="t sy" style="left:2.80px;top:0px;line-height:14px;letter-spacing:0.286px;">зарегист</div>
</div>
<div class="clip" style="left:260px;top:420px;width:122px;height:14px">
<div class="t sy" style="left:2.90px;top:0px;line-height:14px;letter-spacing:0.338px;">ЗАО "Телеком МТК"</div>
</div>
<div class="clip" style="left:383px;top:420px;width:55px;height:14px">
<div class="t sy" style="left:34.00px;top:0px;line-height:14px;letter-spacing:-0.233px;">0.00</div>
</div>
<div class="clip" style="left:439px;top:420px;width:63px;height:14px">
<div class="t sy" style="left:42.00px;top:0px;line-height:14px;letter-spacing:-0.233px;">0.00</div>
</div>
<div class="clip" style="left:503px;top:420px;width:18px;height:14px">
<div class="t sy" style="left:2.30px;top:0px;line-height:14px;">П</div>
</div>
<div class="clip" style="left:522px;top:420px;width:90px;height:14px">
<div class="t sy" style="left:4.20px;top:0px;line-height:14px;letter-spacing:0.000px;">Договор подряда</div>
</div>
<div class="clip" style="left:613px;top:420px;width:86px;height:14px">
<div class="t sy" style="left:3.30px;top:0px;line-height:14px;letter-spacing:0.3px;">ЗСМ/180</div>
</div>
<div class="clip" style="left:700px;top:420px;width:55px;height:14px">
<div class="t sy" style="left:4.40px;top:0px;line-height:14px;letter-spacing:-0.486px;">09-00-02</div>
</div>
<div class="clip" style="left:756px;top:420px;width:194px;height:14px">
<div class="t sy" style="left:2.20px;top:0px;line-height:14px;letter-spacing:0.15px;word-spacing:-1px;">[</div>
</div>
<div class="clip" style="left:756px;top:420px;width:194px;height:14px">
<div class="t sy" style="left:8.40px;top:0px;line-height:14px;letter-spacing:0.15px;word-spacing:-1px;">Строительно-монтажные работы по объекту</div>
</div>
<div class="gl" style="left:29px;top:449px;width:921px;height:1px"></div>
<div class="hl" style="left:10px;top:435px;width:18px;height:1px"></div>
<div class="hl" style="left:10px;top:435px;width:1px;height:14px"></div>
<div class="bk" style="left:10px;top:449px;width:19px;height:1px"></div>
<div class="clip" style="left:29px;top:435px;width:61px;height:14px">
<div class="t sy" style="left:10.90px;top:0px;line-height:14px;letter-spacing:-0.214px;">27.05.03</div>
</div>
<div class="clip" style="left:91px;top:435px;width:48px;height:14px">
<div class="t sy" style="left:4.50px;top:0px;line-height:14px;letter-spacing:-0.186px;">01.04.03</div>
</div>
<div class="clip" style="left:192px;top:435px;width:67px;height:14px">
<div class="t sy" style="left:2.80px;top:0px;line-height:14px;letter-spacing:0.286px;">зарегист</div>
</div>
<div class="clip" style="left:260px;top:435px;width:122px;height:14px">
<div class="t sy" style="left:2.90px;top:0px;line-height:14px;letter-spacing:0.338px;">ЗАО "Телеком МТК"</div>
</div>
<div class="clip" style="left:383px;top:435px;width:55px;height:14px">
<div class="t sy" style="left:34.00px;top:0px;line-height:14px;letter-spacing:-0.233px;">0.00</div>
</div>
<div class="clip" style="left:439px;top:435px;width:63px;height:14px">
<div class="t sy" style="left:42.00px;top:0px;line-height:14px;letter-spacing:-0.233px;">0.00</div>
</div>
<div class="clip" style="left:503px;top:435px;width:18px;height:14px">
<div class="t sy" style="left:2.30px;top:0px;line-height:14px;">П</div>
</div>
<div class="clip" style="left:522px;top:435px;width:90px;height:14px">
<div class="t sy" style="left:4.20px;top:0px;line-height:14px;letter-spacing:0.000px;">Договор подряда</div>
</div>
<div class="clip" style="left:613px;top:435px;width:86px;height:14px">
<div class="t sy" style="left:3.30px;top:0px;line-height:14px;letter-spacing:0.3px;">ЗСМ/139-1</div>
</div>
<div class="clip" style="left:700px;top:435px;width:55px;height:14px">
<div class="t sy" style="left:4.40px;top:0px;line-height:14px;letter-spacing:-0.486px;">09-00-02</div>
</div>
<div class="clip" style="left:756px;top:435px;width:194px;height:14px">
<div class="t sy" style="left:2.20px;top:0px;line-height:14px;letter-spacing:0.15px;word-spacing:-1px;">[</div>
</div>
<div class="clip" style="left:756px;top:435px;width:194px;height:14px">
<div class="t sy" style="left:8.40px;top:0px;line-height:14px;letter-spacing:0.15px;word-spacing:-1px;">Строительно-монтажные работы по объекту</div>
</div>
<div class="gl" style="left:29px;top:464px;width:921px;height:1px"></div>
<div class="hl" style="left:10px;top:450px;width:18px;height:1px"></div>
<div class="hl" style="left:10px;top:450px;width:1px;height:14px"></div>
<div class="bk" style="left:10px;top:464px;width:19px;height:1px"></div>
<div class="clip" style="left:29px;top:450px;width:61px;height:14px">
<div class="t sy" style="left:10.90px;top:0px;line-height:14px;letter-spacing:-0.214px;">27.05.03</div>
</div>
<div class="clip" style="left:91px;top:450px;width:48px;height:14px">
<div class="t sy" style="left:3.50px;top:0px;line-height:14px;letter-spacing:-0.043px;">15.04.03</div>
</div>
<div class="clip" style="left:192px;top:450px;width:67px;height:14px">
<div class="t sy" style="left:2.80px;top:0px;line-height:14px;letter-spacing:0.286px;">зарегист</div>
</div>
<div class="clip" style="left:260px;top:450px;width:122px;height:14px">
<div class="t sy" style="left:2.90px;top:0px;line-height:14px;letter-spacing:0.338px;">ЗАО "Телеком МТК"</div>
</div>
<div class="clip" style="left:383px;top:450px;width:55px;height:14px">
<div class="t sy" style="left:34.00px;top:0px;line-height:14px;letter-spacing:-0.233px;">0.00</div>
</div>
<div class="clip" style="left:439px;top:450px;width:63px;height:14px">
<div class="t sy" style="left:42.00px;top:0px;line-height:14px;letter-spacing:-0.233px;">0.00</div>
</div>
<div class="clip" style="left:503px;top:450px;width:18px;height:14px">
<div class="t sy" style="left:2.30px;top:0px;line-height:14px;">П</div>
</div>
<div class="clip" style="left:522px;top:450px;width:90px;height:14px">
<div class="t sy" style="left:4.20px;top:0px;line-height:14px;letter-spacing:0.000px;">Договор подряда</div>
</div>
<div class="clip" style="left:613px;top:450px;width:86px;height:14px">
<div class="t sy" style="left:3.30px;top:0px;line-height:14px;letter-spacing:0.3px;">ЗСМ/169</div>
</div>
<div class="clip" style="left:700px;top:450px;width:55px;height:14px">
<div class="t sy" style="left:4.40px;top:0px;line-height:14px;letter-spacing:-0.486px;">09-00-02</div>
</div>
<div class="clip" style="left:756px;top:450px;width:194px;height:14px">
<div class="t sy" style="left:2.20px;top:0px;line-height:14px;letter-spacing:0.15px;word-spacing:-1px;">[</div>
</div>
<div class="clip" style="left:756px;top:450px;width:194px;height:14px">
<div class="t sy" style="left:8.40px;top:0px;line-height:14px;letter-spacing:0.15px;word-spacing:-1px;">Строительно-монтажные работы по объекту</div>
</div>
<div class="gl" style="left:29px;top:479px;width:921px;height:1px"></div>
<div class="hl" style="left:10px;top:465px;width:18px;height:1px"></div>
<div class="hl" style="left:10px;top:465px;width:1px;height:14px"></div>
<div class="bk" style="left:10px;top:479px;width:19px;height:1px"></div>
<div class="clip" style="left:29px;top:465px;width:61px;height:14px">
<div class="t sy" style="left:10.90px;top:0px;line-height:14px;letter-spacing:-0.214px;">27.05.03</div>
</div>
<div class="clip" style="left:91px;top:465px;width:48px;height:14px">
<div class="t sy" style="left:3.50px;top:0px;line-height:14px;letter-spacing:-0.043px;">15.05.03</div>
</div>
<div class="clip" style="left:192px;top:465px;width:67px;height:14px">
<div class="t sy" style="left:2.80px;top:0px;line-height:14px;letter-spacing:0.286px;">зарегист</div>
</div>
<div class="clip" style="left:260px;top:465px;width:122px;height:14px">
<div class="t sy" style="left:2.90px;top:0px;line-height:14px;letter-spacing:0.338px;">ЗАО "Телеком МТК"</div>
</div>
<div class="clip" style="left:383px;top:465px;width:55px;height:14px">
<div class="t sy" style="left:34.00px;top:0px;line-height:14px;letter-spacing:-0.233px;">0.00</div>
</div>
<div class="clip" style="left:439px;top:465px;width:63px;height:14px">
<div class="t sy" style="left:42.00px;top:0px;line-height:14px;letter-spacing:-0.233px;">0.00</div>
</div>
<div class="clip" style="left:503px;top:465px;width:18px;height:14px">
<div class="t sy" style="left:2.30px;top:0px;line-height:14px;">П</div>
</div>
<div class="clip" style="left:522px;top:465px;width:90px;height:14px">
<div class="t sy" style="left:4.20px;top:0px;line-height:14px;letter-spacing:0.000px;">Договор подряда</div>
</div>
<div class="clip" style="left:613px;top:465px;width:86px;height:14px">
<div class="t sy" style="left:3.30px;top:0px;line-height:14px;letter-spacing:0.3px;">ЗСМ/192</div>
</div>
<div class="clip" style="left:700px;top:465px;width:55px;height:14px">
<div class="t sy" style="left:4.40px;top:0px;line-height:14px;letter-spacing:-0.486px;">09-00-02</div>
</div>
<div class="clip" style="left:756px;top:465px;width:194px;height:14px">
<div class="t sy" style="left:2.20px;top:0px;line-height:14px;letter-spacing:0.15px;word-spacing:-1px;">[</div>
</div>
<div class="clip" style="left:756px;top:465px;width:194px;height:14px">
<div class="t sy" style="left:8.40px;top:0px;line-height:14px;letter-spacing:0.15px;word-spacing:-1px;">Строительно-монтажные работы по объекту</div>
</div>
<div class="gl" style="left:29px;top:494px;width:921px;height:1px"></div>
<div class="hl" style="left:10px;top:480px;width:18px;height:1px"></div>
<div class="hl" style="left:10px;top:480px;width:1px;height:14px"></div>
<div class="bk" style="left:10px;top:494px;width:19px;height:1px"></div>
<div class="clip" style="left:29px;top:480px;width:61px;height:14px">
<div class="t sy" style="left:10.90px;top:0px;line-height:14px;letter-spacing:-0.214px;">27.05.03</div>
</div>
<div class="clip" style="left:91px;top:480px;width:48px;height:14px">
<div class="t sy" style="left:3.50px;top:0px;line-height:14px;letter-spacing:-0.043px;">12.05.03</div>
</div>
<div class="clip" style="left:192px;top:480px;width:67px;height:14px">
<div class="t sy" style="left:2.80px;top:0px;line-height:14px;letter-spacing:0.286px;">зарегист</div>
</div>
<div class="clip" style="left:260px;top:480px;width:122px;height:14px">
<div class="t sy" style="left:2.90px;top:0px;line-height:14px;letter-spacing:0.338px;">ЗАО "Телеком МТК"</div>
</div>
<div class="clip" style="left:383px;top:480px;width:55px;height:14px">
<div class="t sy" style="left:34.00px;top:0px;line-height:14px;letter-spacing:-0.233px;">0.00</div>
</div>
<div class="clip" style="left:439px;top:480px;width:63px;height:14px">
<div class="t sy" style="left:42.00px;top:0px;line-height:14px;letter-spacing:-0.233px;">0.00</div>
</div>
<div class="clip" style="left:503px;top:480px;width:18px;height:14px">
<div class="t sy" style="left:2.30px;top:0px;line-height:14px;">П</div>
</div>
<div class="clip" style="left:522px;top:480px;width:90px;height:14px">
<div class="t sy" style="left:4.20px;top:0px;line-height:14px;letter-spacing:0.000px;">Договор подряда</div>
</div>
<div class="clip" style="left:613px;top:480px;width:86px;height:14px">
<div class="t sy" style="left:3.30px;top:0px;line-height:14px;letter-spacing:0.3px;">ЗСМ/191</div>
</div>
<div class="clip" style="left:700px;top:480px;width:55px;height:14px">
<div class="t sy" style="left:4.40px;top:0px;line-height:14px;letter-spacing:-0.486px;">09-00-02</div>
</div>
<div class="clip" style="left:756px;top:480px;width:194px;height:14px">
<div class="t sy" style="left:2.20px;top:0px;line-height:14px;letter-spacing:0.15px;word-spacing:-1px;">[</div>
</div>
<div class="clip" style="left:756px;top:480px;width:194px;height:14px">
<div class="t sy" style="left:8.40px;top:0px;line-height:14px;letter-spacing:0.15px;word-spacing:-1px;">Строительно-монтажные работы по объекту</div>
</div>
<div class="gl" style="left:29px;top:509px;width:921px;height:1px"></div>
<div class="hl" style="left:10px;top:495px;width:18px;height:1px"></div>
<div class="hl" style="left:10px;top:495px;width:1px;height:14px"></div>
<div class="bk" style="left:10px;top:509px;width:19px;height:1px"></div>
<div class="clip" style="left:29px;top:495px;width:61px;height:14px">
<div class="t sy" style="left:10.90px;top:0px;line-height:14px;letter-spacing:-0.214px;">27.05.03</div>
</div>
<div class="clip" style="left:91px;top:495px;width:48px;height:14px">
<div class="t sy" style="left:4.50px;top:0px;line-height:14px;letter-spacing:-0.186px;">05.05.03</div>
</div>
<div class="clip" style="left:192px;top:495px;width:67px;height:14px">
<div class="t sy" style="left:2.80px;top:0px;line-height:14px;letter-spacing:0.286px;">зарегист</div>
</div>
<div class="clip" style="left:260px;top:495px;width:122px;height:14px">
<div class="t sy" style="left:2.90px;top:0px;line-height:14px;letter-spacing:0.338px;">ЗАО "Телеком МТК"</div>
</div>
<div class="clip" style="left:383px;top:495px;width:55px;height:14px">
<div class="t sy" style="left:34.00px;top:0px;line-height:14px;letter-spacing:-0.233px;">0.00</div>
</div>
<div class="clip" style="left:439px;top:495px;width:63px;height:14px">
<div class="t sy" style="left:42.00px;top:0px;line-height:14px;letter-spacing:-0.233px;">0.00</div>
</div>
<div class="clip" style="left:503px;top:495px;width:18px;height:14px">
<div class="t sy" style="left:2.30px;top:0px;line-height:14px;">П</div>
</div>
<div class="clip" style="left:522px;top:495px;width:90px;height:14px">
<div class="t sy" style="left:4.20px;top:0px;line-height:14px;letter-spacing:0.000px;">Договор подряда</div>
</div>
<div class="clip" style="left:613px;top:495px;width:86px;height:14px">
<div class="t sy" style="left:3.30px;top:0px;line-height:14px;letter-spacing:0.3px;">ЗСМ/190</div>
</div>
<div class="clip" style="left:700px;top:495px;width:55px;height:14px">
<div class="t sy" style="left:4.40px;top:0px;line-height:14px;letter-spacing:-0.486px;">09-00-02</div>
</div>
<div class="clip" style="left:756px;top:495px;width:194px;height:14px">
<div class="t sy" style="left:2.20px;top:0px;line-height:14px;letter-spacing:0.15px;word-spacing:-1px;">[</div>
</div>
<div class="clip" style="left:756px;top:495px;width:194px;height:14px">
<div class="t sy" style="left:8.40px;top:0px;line-height:14px;letter-spacing:0.15px;word-spacing:-1px;">Строительно-монтажные работы по объекту</div>
</div>
<div class="gl" style="left:29px;top:524px;width:921px;height:1px"></div>
<div class="hl" style="left:10px;top:510px;width:18px;height:1px"></div>
<div class="hl" style="left:10px;top:510px;width:1px;height:14px"></div>
<div class="bk" style="left:10px;top:524px;width:19px;height:1px"></div>
<div class="clip" style="left:29px;top:510px;width:61px;height:14px">
<div class="t sy" style="left:10.90px;top:0px;line-height:14px;letter-spacing:-0.214px;">27.05.03</div>
</div>
<div class="clip" style="left:91px;top:510px;width:48px;height:14px">
<div class="t sy" style="left:4.50px;top:0px;line-height:14px;letter-spacing:-0.186px;">21.05.03</div>
</div>
<div class="clip" style="left:192px;top:510px;width:67px;height:14px">
<div class="t sy" style="left:2.80px;top:0px;line-height:14px;letter-spacing:0.286px;">зарегист</div>
</div>
<div class="clip" style="left:260px;top:510px;width:122px;height:14px">
<div class="t sy" style="left:2.90px;top:0px;line-height:14px;letter-spacing:0.338px;">ЗАО "Телеком МТК"</div>
</div>
<div class="clip" style="left:383px;top:510px;width:55px;height:14px">
<div class="t sy" style="left:34.00px;top:0px;line-height:14px;letter-spacing:-0.233px;">0.00</div>
</div>
<div class="clip" style="left:439px;top:510px;width:63px;height:14px">
<div class="t sy" style="left:42.00px;top:0px;line-height:14px;letter-spacing:-0.233px;">0.00</div>
</div>
<div class="clip" style="left:503px;top:510px;width:18px;height:14px">
<div class="t sy" style="left:2.30px;top:0px;line-height:14px;">П</div>
</div>
<div class="clip" style="left:522px;top:510px;width:90px;height:14px">
<div class="t sy" style="left:4.20px;top:0px;line-height:14px;letter-spacing:0.000px;">Договор подряда</div>
</div>
<div class="clip" style="left:613px;top:510px;width:86px;height:14px">
<div class="t sy" style="left:3.30px;top:0px;line-height:14px;letter-spacing:0.3px;">ЗСМ/200</div>
</div>
<div class="clip" style="left:700px;top:510px;width:55px;height:14px">
<div class="t sy" style="left:4.40px;top:0px;line-height:14px;letter-spacing:-0.486px;">09-00-02</div>
</div>
<div class="clip" style="left:756px;top:510px;width:194px;height:14px">
<div class="t sy" style="left:2.20px;top:0px;line-height:14px;letter-spacing:0.15px;word-spacing:-1px;">[</div>
</div>
<div class="clip" style="left:756px;top:510px;width:194px;height:14px">
<div class="t sy" style="left:8.40px;top:0px;line-height:14px;letter-spacing:0.15px;word-spacing:-1px;">Строительно-монтажные работы по объекту</div>
</div>
<div class="gl" style="left:29px;top:539px;width:921px;height:1px"></div>
<div class="hl" style="left:10px;top:525px;width:18px;height:1px"></div>
<div class="hl" style="left:10px;top:525px;width:1px;height:14px"></div>
<div class="bk" style="left:10px;top:539px;width:19px;height:1px"></div>
<div class="clip" style="left:29px;top:525px;width:61px;height:14px">
<div class="t sy" style="left:10.90px;top:0px;line-height:14px;letter-spacing:-0.214px;">26.05.03</div>
</div>
<div class="clip" style="left:91px;top:525px;width:48px;height:14px">
<div class="t sy" style="left:3.50px;top:0px;line-height:14px;letter-spacing:-0.043px;">19.05.03</div>
</div>
<div class="clip" style="left:192px;top:525px;width:67px;height:14px">
<div class="t sy" style="left:2.80px;top:0px;line-height:14px;letter-spacing:0.286px;">зарегист</div>
</div>
<div class="clip" style="left:260px;top:525px;width:122px;height:14px">
<div class="t sy" style="left:2.90px;top:0px;line-height:14px;letter-spacing:0.338px;">ЗАО "Телеком МТК"</div>
</div>
<div class="clip" style="left:383px;top:525px;width:55px;height:14px">
<div class="t sy" style="left:34.00px;top:0px;line-height:14px;letter-spacing:-0.233px;">0.00</div>
</div>
<div class="clip" style="left:439px;top:525px;width:63px;height:14px">
<div class="t sy" style="left:42.00px;top:0px;line-height:14px;letter-spacing:-0.233px;">0.00</div>
</div>
<div class="clip" style="left:503px;top:525px;width:18px;height:14px">
<div class="t sy" style="left:2.30px;top:0px;line-height:14px;">П</div>
</div>
<div class="clip" style="left:522px;top:525px;width:90px;height:14px">
<div class="t sy" style="left:4.20px;top:0px;line-height:14px;letter-spacing:0.000px;">Договор подряда</div>
</div>
<div class="clip" style="left:613px;top:525px;width:86px;height:14px">
<div class="t sy" style="left:3.30px;top:0px;line-height:14px;letter-spacing:0.3px;">ЗСМ/194</div>
</div>
<div class="clip" style="left:700px;top:525px;width:55px;height:14px">
<div class="t sy" style="left:4.40px;top:0px;line-height:14px;letter-spacing:-0.486px;">09-00-02</div>
</div>
<div class="clip" style="left:756px;top:525px;width:194px;height:14px">
<div class="t sy" style="left:2.20px;top:0px;line-height:14px;letter-spacing:0.15px;word-spacing:-1px;">[</div>
</div>
<div class="clip" style="left:756px;top:525px;width:194px;height:14px">
<div class="t sy" style="left:8.40px;top:0px;line-height:14px;letter-spacing:0.15px;word-spacing:-1px;">Строительно-монтажные работы по объекту</div>
</div>
<div class="gl" style="left:29px;top:554px;width:921px;height:1px"></div>
<div class="hl" style="left:10px;top:540px;width:18px;height:1px"></div>
<div class="hl" style="left:10px;top:540px;width:1px;height:14px"></div>
<div class="bk" style="left:10px;top:554px;width:19px;height:1px"></div>
<div class="clip" style="left:29px;top:540px;width:61px;height:14px">
<div class="t sy" style="left:10.90px;top:0px;line-height:14px;letter-spacing:-0.214px;">26.05.03</div>
</div>
<div class="clip" style="left:91px;top:540px;width:48px;height:14px">
<div class="t sy" style="left:4.50px;top:0px;line-height:14px;letter-spacing:-0.186px;">05.05.03</div>
</div>
<div class="clip" style="left:192px;top:540px;width:67px;height:14px">
<div class="t sy" style="left:2.80px;top:0px;line-height:14px;letter-spacing:0.286px;">зарегист</div>
</div>
<div class="clip" style="left:260px;top:540px;width:122px;height:14px">
<div class="t sy" style="left:2.90px;top:0px;line-height:14px;letter-spacing:0.338px;">ЗАО "Телеком МТК"</div>
</div>
<div class="clip" style="left:383px;top:540px;width:55px;height:14px">
<div class="t sy" style="left:34.00px;top:0px;line-height:14px;letter-spacing:-0.233px;">0.00</div>
</div>
<div class="clip" style="left:439px;top:540px;width:63px;height:14px">
<div class="t sy" style="left:42.00px;top:0px;line-height:14px;letter-spacing:-0.233px;">0.00</div>
</div>
<div class="clip" style="left:503px;top:540px;width:18px;height:14px">
<div class="t sy" style="left:2.30px;top:0px;line-height:14px;">П</div>
</div>
<div class="clip" style="left:522px;top:540px;width:90px;height:14px">
<div class="t sy" style="left:4.20px;top:0px;line-height:14px;letter-spacing:0.000px;">Договор подряда</div>
</div>
<div class="clip" style="left:613px;top:540px;width:86px;height:14px">
<div class="t sy" style="left:3.30px;top:0px;line-height:14px;letter-spacing:0.3px;">ЗСП/105</div>
</div>
<div class="clip" style="left:700px;top:540px;width:55px;height:14px">
<div class="t sy" style="left:4.40px;top:0px;line-height:14px;letter-spacing:-0.486px;">09-00-02</div>
</div>
<div class="clip" style="left:756px;top:540px;width:194px;height:14px">
<div class="t sy" style="left:2.20px;top:0px;line-height:14px;letter-spacing:0.15px;word-spacing:-1px;">[</div>
</div>
<div class="clip" style="left:756px;top:540px;width:194px;height:14px">
<div class="t sy" style="left:8.40px;top:0px;line-height:14px;letter-spacing:0.15px;word-spacing:-1px;">Проектирование станционных сооружений</div>
</div>
<div class="gl" style="left:29px;top:569px;width:921px;height:1px"></div>
<div class="hl" style="left:10px;top:555px;width:18px;height:1px"></div>
<div class="hl" style="left:10px;top:555px;width:1px;height:14px"></div>
<div class="bk" style="left:10px;top:569px;width:19px;height:1px"></div>
<div class="clip" style="left:29px;top:555px;width:61px;height:14px">
<div class="t sy" style="left:10.90px;top:0px;line-height:14px;letter-spacing:-0.214px;">26.05.03</div>
</div>
<div class="clip" style="left:91px;top:555px;width:48px;height:14px">
<div class="t sy" style="left:4.50px;top:0px;line-height:14px;letter-spacing:-0.186px;">05.05.03</div>
</div>
<div class="clip" style="left:192px;top:555px;width:67px;height:14px">
<div class="t sy" style="left:2.80px;top:0px;line-height:14px;letter-spacing:0.286px;">зарегист</div>
</div>
<div class="clip" style="left:260px;top:555px;width:122px;height:14px">
<div class="t sy" style="left:2.90px;top:0px;line-height:14px;letter-spacing:0.338px;">ЗАО "Телеком МТК"</div>
</div>
<div class="clip" style="left:383px;top:555px;width:55px;height:14px">
<div class="t sy" style="left:34.00px;top:0px;line-height:14px;letter-spacing:-0.233px;">0.00</div>
</div>
<div class="clip" style="left:439px;top:555px;width:63px;height:14px">
<div class="t sy" style="left:42.00px;top:0px;line-height:14px;letter-spacing:-0.233px;">0.00</div>
</div>
<div class="clip" style="left:503px;top:555px;width:18px;height:14px">
<div class="t sy" style="left:2.30px;top:0px;line-height:14px;">П</div>
</div>
<div class="clip" style="left:522px;top:555px;width:90px;height:14px">
<div class="t sy" style="left:4.20px;top:0px;line-height:14px;letter-spacing:0.000px;">Договор подряда</div>
</div>
<div class="clip" style="left:613px;top:555px;width:86px;height:14px">
<div class="t sy" style="left:3.30px;top:0px;line-height:14px;letter-spacing:0.3px;">ЗСМ/189</div>
</div>
<div class="clip" style="left:700px;top:555px;width:55px;height:14px">
<div class="t sy" style="left:4.40px;top:0px;line-height:14px;letter-spacing:-0.486px;">09-00-02</div>
</div>
<div class="clip" style="left:756px;top:555px;width:194px;height:14px">
<div class="t sy" style="left:2.20px;top:0px;line-height:14px;letter-spacing:0.15px;word-spacing:-1px;">[</div>
</div>
<div class="clip" style="left:756px;top:555px;width:194px;height:14px">
<div class="t sy" style="left:8.40px;top:0px;line-height:14px;letter-spacing:0.15px;word-spacing:-1px;">Строительно-монтажные работы по объекту</div>
</div>
<div class="gl" style="left:29px;top:584px;width:921px;height:1px"></div>
<div class="hl" style="left:10px;top:570px;width:18px;height:1px"></div>
<div class="hl" style="left:10px;top:570px;width:1px;height:14px"></div>
<div class="bk" style="left:10px;top:584px;width:19px;height:1px"></div>
<div class="clip" style="left:29px;top:570px;width:61px;height:14px">
<div class="t sy" style="left:10.90px;top:0px;line-height:14px;letter-spacing:-0.214px;">26.05.03</div>
</div>
<div class="clip" style="left:91px;top:570px;width:48px;height:14px">
<div class="t sy" style="left:4.50px;top:0px;line-height:14px;letter-spacing:-0.186px;">25.04.03</div>
</div>
<div class="clip" style="left:192px;top:570px;width:67px;height:14px">
<div class="t sy" style="left:2.80px;top:0px;line-height:14px;letter-spacing:0.286px;">зарегист</div>
</div>
<div class="clip" style="left:260px;top:570px;width:122px;height:14px">
<div class="t sy" style="left:2.90px;top:0px;line-height:14px;letter-spacing:0.338px;">ЗАО "Телеком МТК"</div>
</div>
<div class="clip" style="left:383px;top:570px;width:55px;height:14px">
<div class="t sy" style="left:34.00px;top:0px;line-height:14px;letter-spacing:-0.233px;">0.00</div>
</div>
<div class="clip" style="left:439px;top:570px;width:63px;height:14px">
<div class="t sy" style="left:42.00px;top:0px;line-height:14px;letter-spacing:-0.233px;">0.00</div>
</div>
<div class="clip" style="left:503px;top:570px;width:18px;height:14px">
<div class="t sy" style="left:2.30px;top:0px;line-height:14px;">П</div>
</div>
<div class="clip" style="left:522px;top:570px;width:90px;height:14px">
<div class="t sy" style="left:4.20px;top:0px;line-height:14px;letter-spacing:0.000px;">Договор подряда</div>
</div>
<div class="clip" style="left:613px;top:570px;width:86px;height:14px">
<div class="t sy" style="left:3.30px;top:0px;line-height:14px;letter-spacing:0.3px;">ЗСМ/182</div>
</div>
<div class="clip" style="left:700px;top:570px;width:55px;height:14px">
<div class="t sy" style="left:4.40px;top:0px;line-height:14px;letter-spacing:-0.486px;">09-00-02</div>
</div>
<div class="clip" style="left:756px;top:570px;width:194px;height:14px">
<div class="t sy" style="left:2.20px;top:0px;line-height:14px;letter-spacing:0.15px;word-spacing:-1px;">[</div>
</div>
<div class="clip" style="left:756px;top:570px;width:194px;height:14px">
<div class="t sy" style="left:8.40px;top:0px;line-height:14px;letter-spacing:0.15px;word-spacing:-1px;">Строительно-монтажные работы по объекту</div>
</div>
<div class="gl" style="left:29px;top:599px;width:921px;height:1px"></div>
<div class="hl" style="left:10px;top:585px;width:18px;height:1px"></div>
<div class="hl" style="left:10px;top:585px;width:1px;height:14px"></div>
<div class="bk" style="left:10px;top:599px;width:19px;height:1px"></div>
<div class="clip" style="left:29px;top:585px;width:61px;height:14px">
<div class="t sy" style="left:10.90px;top:0px;line-height:14px;letter-spacing:-0.214px;">26.05.03</div>
</div>
<div class="clip" style="left:91px;top:585px;width:48px;height:14px">
<div class="t sy" style="left:4.50px;top:0px;line-height:14px;letter-spacing:-0.186px;">09.04.03</div>
</div>
<div class="clip" style="left:192px;top:585px;width:67px;height:14px">
<div class="t sy" style="left:2.80px;top:0px;line-height:14px;letter-spacing:0.286px;">зарегист</div>
</div>
<div class="clip" style="left:260px;top:585px;width:122px;height:14px">
<div class="t sy" style="left:2.90px;top:0px;line-height:14px;letter-spacing:0.338px;">ЗАО "Телеком МТК"</div>
</div>
<div class="clip" style="left:383px;top:585px;width:55px;height:14px">
<div class="t sy" style="left:34.00px;top:0px;line-height:14px;letter-spacing:-0.233px;">0.00</div>
</div>
<div class="clip" style="left:439px;top:585px;width:63px;height:14px">
<div class="t sy" style="left:42.00px;top:0px;line-height:14px;letter-spacing:-0.233px;">0.00</div>
</div>
<div class="clip" style="left:503px;top:585px;width:18px;height:14px">
<div class="t sy" style="left:2.30px;top:0px;line-height:14px;">П</div>
</div>
<div class="clip" style="left:522px;top:585px;width:90px;height:14px">
<div class="t sy" style="left:4.20px;top:0px;line-height:14px;letter-spacing:0.000px;">Договор подряда</div>
</div>
<div class="clip" style="left:613px;top:585px;width:86px;height:14px">
<div class="t sy" style="left:3.30px;top:0px;line-height:14px;letter-spacing:0.3px;">ЗСМ/155</div>
</div>
<div class="clip" style="left:700px;top:585px;width:55px;height:14px">
<div class="t sy" style="left:4.40px;top:0px;line-height:14px;letter-spacing:-0.486px;">09-00-02</div>
</div>
<div class="clip" style="left:756px;top:585px;width:194px;height:14px">
<div class="t sy" style="left:2.20px;top:0px;line-height:14px;letter-spacing:0.15px;word-spacing:-1px;">[</div>
</div>
<div class="clip" style="left:756px;top:585px;width:194px;height:14px">
<div class="t sy" style="left:8.40px;top:0px;line-height:14px;letter-spacing:0.15px;word-spacing:-1px;">Строительно-монтажные работы по объекту</div>
</div>
<div class="gl" style="left:29px;top:614px;width:921px;height:1px"></div>
<div class="hl" style="left:10px;top:600px;width:18px;height:1px"></div>
<div class="hl" style="left:10px;top:600px;width:1px;height:14px"></div>
<div class="bk" style="left:10px;top:614px;width:19px;height:1px"></div>
<div class="clip" style="left:29px;top:600px;width:61px;height:14px">
<div class="t sy" style="left:10.90px;top:0px;line-height:14px;letter-spacing:-0.214px;">26.05.03</div>
</div>
<div class="clip" style="left:91px;top:600px;width:48px;height:14px">
<div class="t sy" style="left:3.50px;top:0px;line-height:14px;letter-spacing:-0.043px;">10.04.03</div>
</div>
<div class="clip" style="left:192px;top:600px;width:67px;height:14px">
<div class="t sy" style="left:2.80px;top:0px;line-height:14px;letter-spacing:0.286px;">зарегист</div>
</div>
<div class="clip" style="left:260px;top:600px;width:122px;height:14px">
<div class="t sy" style="left:2.90px;top:0px;line-height:14px;letter-spacing:0.338px;">ЗАО "Телеком МТК"</div>
</div>
<div class="clip" style="left:383px;top:600px;width:55px;height:14px">
<div class="t sy" style="left:34.00px;top:0px;line-height:14px;letter-spacing:-0.233px;">0.00</div>
</div>
<div class="clip" style="left:439px;top:600px;width:63px;height:14px">
<div class="t sy" style="left:42.00px;top:0px;line-height:14px;letter-spacing:-0.233px;">0.00</div>
</div>
<div class="clip" style="left:503px;top:600px;width:18px;height:14px">
<div class="t sy" style="left:2.30px;top:0px;line-height:14px;">П</div>
</div>
<div class="clip" style="left:522px;top:600px;width:90px;height:14px">
<div class="t sy" style="left:4.20px;top:0px;line-height:14px;letter-spacing:0.000px;">Договор подряда</div>
</div>
<div class="clip" style="left:613px;top:600px;width:86px;height:14px">
<div class="t sy" style="left:3.30px;top:0px;line-height:14px;letter-spacing:0.3px;">ЗСМ/156</div>
</div>
<div class="clip" style="left:700px;top:600px;width:55px;height:14px">
<div class="t sy" style="left:4.40px;top:0px;line-height:14px;letter-spacing:-0.486px;">09-00-02</div>
</div>
<div class="clip" style="left:756px;top:600px;width:194px;height:14px">
<div class="t sy" style="left:2.20px;top:0px;line-height:14px;letter-spacing:0.15px;word-spacing:-1px;">[</div>
</div>
<div class="clip" style="left:756px;top:600px;width:194px;height:14px">
<div class="t sy" style="left:8.40px;top:0px;line-height:14px;letter-spacing:0.15px;word-spacing:-1px;">Строительно-монтажные работы по объекту</div>
</div>
<div class="gl" style="left:29px;top:629px;width:921px;height:1px"></div>
<div class="hl" style="left:10px;top:615px;width:18px;height:1px"></div>
<div class="hl" style="left:10px;top:615px;width:1px;height:14px"></div>
<div class="bk" style="left:10px;top:629px;width:19px;height:1px"></div>
<div class="clip" style="left:29px;top:615px;width:61px;height:14px">
<div class="t sy" style="left:10.90px;top:0px;line-height:14px;letter-spacing:-0.214px;">26.05.03</div>
</div>
<div class="clip" style="left:91px;top:615px;width:48px;height:14px">
<div class="t sy" style="left:3.50px;top:0px;line-height:14px;letter-spacing:-0.043px;">19.05.03</div>
</div>
<div class="clip" style="left:192px;top:615px;width:67px;height:14px">
<div class="t sy" style="left:2.80px;top:0px;line-height:14px;letter-spacing:0.286px;">зарегист</div>
</div>
<div class="clip" style="left:260px;top:615px;width:122px;height:14px">
<div class="t sy" style="left:2.90px;top:0px;line-height:14px;letter-spacing:0.338px;">ЗАО "Телеком МТК"</div>
</div>
<div class="clip" style="left:383px;top:615px;width:55px;height:14px">
<div class="t sy" style="left:34.00px;top:0px;line-height:14px;letter-spacing:-0.233px;">0.00</div>
</div>
<div class="clip" style="left:439px;top:615px;width:63px;height:14px">
<div class="t sy" style="left:42.00px;top:0px;line-height:14px;letter-spacing:-0.233px;">0.00</div>
</div>
<div class="clip" style="left:503px;top:615px;width:18px;height:14px">
<div class="t sy" style="left:2.30px;top:0px;line-height:14px;">П</div>
</div>
<div class="clip" style="left:522px;top:615px;width:90px;height:14px">
<div class="t sy" style="left:4.20px;top:0px;line-height:14px;letter-spacing:0.000px;">Договор подряда</div>
</div>
<div class="clip" style="left:613px;top:615px;width:86px;height:14px">
<div class="t sy" style="left:3.30px;top:0px;line-height:14px;letter-spacing:0.3px;">ЗСМ/199</div>
</div>
<div class="clip" style="left:700px;top:615px;width:55px;height:14px">
<div class="t sy" style="left:4.40px;top:0px;line-height:14px;letter-spacing:-0.486px;">09-00-02</div>
</div>
<div class="clip" style="left:756px;top:615px;width:194px;height:14px">
<div class="t sy" style="left:2.20px;top:0px;line-height:14px;letter-spacing:0.15px;word-spacing:-1px;">[</div>
</div>
<div class="clip" style="left:756px;top:615px;width:194px;height:14px">
<div class="t sy" style="left:8.40px;top:0px;line-height:14px;letter-spacing:0.15px;word-spacing:-1px;">Строительно-монтажные работы по объекту</div>
</div>
<div class="gl" style="left:29px;top:644px;width:921px;height:1px"></div>
<div class="hl" style="left:10px;top:630px;width:18px;height:1px"></div>
<div class="hl" style="left:10px;top:630px;width:1px;height:14px"></div>
<div class="bk" style="left:10px;top:644px;width:19px;height:1px"></div>
<div class="clip" style="left:29px;top:630px;width:61px;height:14px">
<div class="t sy" style="left:10.90px;top:0px;line-height:14px;letter-spacing:-0.214px;">26.05.03</div>
</div>
<div class="clip" style="left:91px;top:630px;width:48px;height:14px">
<div class="t sy" style="left:3.50px;top:0px;line-height:14px;letter-spacing:-0.043px;">19.05.03</div>
</div>
<div class="clip" style="left:192px;top:630px;width:67px;height:14px">
<div class="t sy" style="left:2.80px;top:0px;line-height:14px;letter-spacing:0.286px;">зарегист</div>
</div>
<div class="clip" style="left:260px;top:630px;width:122px;height:14px">
<div class="t sy" style="left:2.90px;top:0px;line-height:14px;letter-spacing:0.338px;">ЗАО "Телеком МТК"</div>
</div>
<div class="clip" style="left:383px;top:630px;width:55px;height:14px">
<div class="t sy" style="left:34.00px;top:0px;line-height:14px;letter-spacing:-0.233px;">0.00</div>
</div>
<div class="clip" style="left:439px;top:630px;width:63px;height:14px">
<div class="t sy" style="left:42.00px;top:0px;line-height:14px;letter-spacing:-0.233px;">0.00</div>
</div>
<div class="clip" style="left:503px;top:630px;width:18px;height:14px">
<div class="t sy" style="left:2.30px;top:0px;line-height:14px;">П</div>
</div>
<div class="clip" style="left:522px;top:630px;width:90px;height:14px">
<div class="t sy" style="left:4.20px;top:0px;line-height:14px;letter-spacing:0.000px;">Договор подряда</div>
</div>
<div class="clip" style="left:613px;top:630px;width:86px;height:14px">
<div class="t sy" style="left:3.30px;top:0px;line-height:14px;letter-spacing:0.3px;">ЗСП/112</div>
</div>
<div class="clip" style="left:700px;top:630px;width:55px;height:14px">
<div class="t sy" style="left:4.40px;top:0px;line-height:14px;letter-spacing:-0.486px;">09-00-02</div>
</div>
<div class="clip" style="left:756px;top:630px;width:194px;height:14px">
<div class="t sy" style="left:2.20px;top:0px;line-height:14px;letter-spacing:0.15px;word-spacing:-1px;">[</div>
</div>
<div class="clip" style="left:756px;top:630px;width:194px;height:14px">
<div class="t sy" style="left:8.40px;top:0px;line-height:14px;letter-spacing:0.15px;word-spacing:-1px;">Проектирование станционных сооружений</div>
</div>
<div class="gl" style="left:29px;top:659px;width:921px;height:1px"></div>
<div class="hl" style="left:10px;top:645px;width:18px;height:1px"></div>
<div class="hl" style="left:10px;top:645px;width:1px;height:14px"></div>
<div class="bk" style="left:10px;top:659px;width:19px;height:1px"></div>
<div class="clip" style="left:29px;top:645px;width:61px;height:14px">
<div class="t sy" style="left:10.90px;top:0px;line-height:14px;letter-spacing:-0.214px;">26.05.03</div>
</div>
<div class="clip" style="left:91px;top:645px;width:48px;height:14px">
<div class="t sy" style="left:4.50px;top:0px;line-height:14px;letter-spacing:-0.186px;">20.05.03</div>
</div>
<div class="clip" style="left:192px;top:645px;width:67px;height:14px">
<div class="t sy" style="left:2.80px;top:0px;line-height:14px;letter-spacing:0.286px;">зарегист</div>
</div>
<div class="clip" style="left:260px;top:645px;width:122px;height:14px">
<div class="t sy" style="left:2.90px;top:0px;line-height:14px;letter-spacing:0.338px;">ЗАО "Телеком МТК"</div>
</div>
<div class="clip" style="left:383px;top:645px;width:55px;height:14px">
<div class="t sy" style="left:34.00px;top:0px;line-height:14px;letter-spacing:-0.233px;">0.00</div>
</div>
<div class="clip" style="left:439px;top:645px;width:63px;height:14px">
<div class="t sy" style="left:42.00px;top:0px;line-height:14px;letter-spacing:-0.233px;">0.00</div>
</div>
<div class="clip" style="left:503px;top:645px;width:18px;height:14px">
<div class="t sy" style="left:2.30px;top:0px;line-height:14px;">П</div>
</div>
<div class="clip" style="left:522px;top:645px;width:90px;height:14px">
<div class="t sy" style="left:4.20px;top:0px;line-height:14px;letter-spacing:0.000px;">Договор подряда</div>
</div>
<div class="clip" style="left:613px;top:645px;width:86px;height:14px">
<div class="t sy" style="left:3.30px;top:0px;line-height:14px;letter-spacing:0.3px;">ЗЛ6/037</div>
</div>
<div class="clip" style="left:700px;top:645px;width:55px;height:14px">
<div class="t sy" style="left:4.40px;top:0px;line-height:14px;letter-spacing:-0.486px;">09-00-02</div>
</div>
<div class="clip" style="left:756px;top:645px;width:194px;height:14px">
<div class="t sy" style="left:2.20px;top:0px;line-height:14px;letter-spacing:0.15px;word-spacing:-1px;">[</div>
</div>
<div class="clip" style="left:756px;top:645px;width:194px;height:14px">
<div class="t sy" style="left:8.40px;top:0px;line-height:14px;letter-spacing:0.15px;word-spacing:-1px;">Строительство телефонной канализации</div>
</div>
<div class="gl" style="left:29px;top:674px;width:921px;height:1px"></div>
<div class="hl" style="left:10px;top:660px;width:18px;height:1px"></div>
<div class="hl" style="left:10px;top:660px;width:1px;height:14px"></div>
<div class="bk" style="left:10px;top:674px;width:19px;height:1px"></div>
<div class="clip" style="left:29px;top:660px;width:61px;height:14px">
<div class="t sy" style="left:10.90px;top:0px;line-height:14px;letter-spacing:-0.214px;">26.05.03</div>
</div>
<div class="clip" style="left:91px;top:660px;width:48px;height:14px">
<div class="t sy" style="left:3.50px;top:0px;line-height:14px;letter-spacing:-0.043px;">19.05.03</div>
</div>
<div class="clip" style="left:192px;top:660px;width:67px;height:14px">
<div class="t sy" style="left:2.80px;top:0px;line-height:14px;letter-spacing:0.286px;">зарегист</div>
</div>
<div class="clip" style="left:260px;top:660px;width:122px;height:14px">
<div class="t sy" style="left:2.90px;top:0px;line-height:14px;letter-spacing:0.338px;">ЗАО "Телеком МТК"</div>
</div>
<div class="clip" style="left:383px;top:660px;width:55px;height:14px">
<div class="t sy" style="left:34.00px;top:0px;line-height:14px;letter-spacing:-0.233px;">0.00</div>
</div>
<div class="clip" style="left:439px;top:660px;width:63px;height:14px">
<div class="t sy" style="left:42.00px;top:0px;line-height:14px;letter-spacing:-0.233px;">0.00</div>
</div>
<div class="clip" style="left:503px;top:660px;width:18px;height:14px">
<div class="t sy" style="left:2.30px;top:0px;line-height:14px;">П</div>
</div>
<div class="clip" style="left:522px;top:660px;width:90px;height:14px">
<div class="t sy" style="left:4.20px;top:0px;line-height:14px;letter-spacing:0.000px;">Договор подряда</div>
</div>
<div class="clip" style="left:613px;top:660px;width:86px;height:14px">
<div class="t sy" style="left:3.30px;top:0px;line-height:14px;letter-spacing:0.3px;">ЗЛ2/092</div>
</div>
<div class="clip" style="left:700px;top:660px;width:55px;height:14px">
<div class="t sy" style="left:4.40px;top:0px;line-height:14px;letter-spacing:-0.486px;">09-00-02</div>
</div>
<div class="clip" style="left:756px;top:660px;width:194px;height:14px">
<div class="t sy" style="left:2.20px;top:0px;line-height:14px;letter-spacing:0.15px;word-spacing:-1px;">[</div>
</div>
<div class="clip" style="left:756px;top:660px;width:194px;height:14px">
<div class="t sy" style="left:8.40px;top:0px;line-height:14px;letter-spacing:0.15px;word-spacing:-1px;">Проектирование строительства телефонной</div>
</div>
<div class="gl" style="left:29px;top:689px;width:921px;height:1px"></div>
<div class="hl" style="left:10px;top:675px;width:18px;height:1px"></div>
<div class="hl" style="left:10px;top:675px;width:1px;height:14px"></div>
<div class="bk" style="left:10px;top:689px;width:19px;height:1px"></div>
<div class="clip" style="left:29px;top:675px;width:61px;height:14px">
<div class="t sy" style="left:10.90px;top:0px;line-height:14px;letter-spacing:-0.214px;">26.05.03</div>
</div>
<div class="clip" style="left:91px;top:675px;width:48px;height:14px">
<div class="t sy" style="left:3.50px;top:0px;line-height:14px;letter-spacing:-0.043px;">19.05.03</div>
</div>
<div class="clip" style="left:192px;top:675px;width:67px;height:14px">
<div class="t sy" style="left:2.80px;top:0px;line-height:14px;letter-spacing:0.286px;">зарегист</div>
</div>
<div class="clip" style="left:260px;top:675px;width:122px;height:14px">
<div class="t sy" style="left:2.90px;top:0px;line-height:14px;letter-spacing:0.338px;">ЗАО "Телеком МТК"</div>
</div>
<div class="clip" style="left:383px;top:675px;width:55px;height:14px">
<div class="t sy" style="left:34.00px;top:0px;line-height:14px;letter-spacing:-0.233px;">0.00</div>
</div>
<div class="clip" style="left:439px;top:675px;width:63px;height:14px">
<div class="t sy" style="left:42.00px;top:0px;line-height:14px;letter-spacing:-0.233px;">0.00</div>
</div>
<div class="clip" style="left:503px;top:675px;width:18px;height:14px">
<div class="t sy" style="left:2.30px;top:0px;line-height:14px;">П</div>
</div>
<div class="clip" style="left:522px;top:675px;width:90px;height:14px">
<div class="t sy" style="left:4.20px;top:0px;line-height:14px;letter-spacing:0.000px;">Договор подряда</div>
</div>
<div class="clip" style="left:613px;top:675px;width:86px;height:14px">
<div class="t sy" style="left:3.30px;top:0px;line-height:14px;letter-spacing:0.3px;">ЗЛ2/093</div>
</div>
<div class="clip" style="left:700px;top:675px;width:55px;height:14px">
<div class="t sy" style="left:4.40px;top:0px;line-height:14px;letter-spacing:-0.486px;">09-00-02</div>
</div>
<div class="clip" style="left:756px;top:675px;width:194px;height:14px">
<div class="t sy" style="left:2.20px;top:0px;line-height:14px;letter-spacing:0.15px;word-spacing:-1px;">[</div>
</div>
<div class="clip" style="left:756px;top:675px;width:194px;height:14px">
<div class="t sy" style="left:8.40px;top:0px;line-height:14px;letter-spacing:0.15px;word-spacing:-1px;">Проектирование прокладки линии г</div>
</div>
<div class="gl" style="left:29px;top:704px;width:921px;height:1px"></div>
<div class="hl" style="left:10px;top:690px;width:18px;height:1px"></div>
<div class="hl" style="left:10px;top:690px;width:1px;height:14px"></div>
<div class="bk" style="left:10px;top:704px;width:19px;height:1px"></div>
<div class="clip" style="left:29px;top:690px;width:61px;height:14px">
<div class="t sy" style="left:10.90px;top:0px;line-height:14px;letter-spacing:-0.214px;">26.05.03</div>
</div>
<div class="clip" style="left:91px;top:690px;width:48px;height:14px">
<div class="t sy" style="left:3.50px;top:0px;line-height:14px;letter-spacing:-0.043px;">19.05.03</div>
</div>
<div class="clip" style="left:192px;top:690px;width:67px;height:14px">
<div class="t sy" style="left:2.80px;top:0px;line-height:14px;letter-spacing:0.286px;">зарегист</div>
</div>
<div class="clip" style="left:260px;top:690px;width:122px;height:14px">
<div class="t sy" style="left:2.90px;top:0px;line-height:14px;letter-spacing:0.338px;">ЗАО "Телеком МТК"</div>
</div>
<div class="clip" style="left:383px;top:690px;width:55px;height:14px">
<div class="t sy" style="left:34.00px;top:0px;line-height:14px;letter-spacing:-0.233px;">0.00</div>
</div>
<div class="clip" style="left:439px;top:690px;width:63px;height:14px">
<div class="t sy" style="left:42.00px;top:0px;line-height:14px;letter-spacing:-0.233px;">0.00</div>
</div>
<div class="clip" style="left:503px;top:690px;width:18px;height:14px">
<div class="t sy" style="left:2.30px;top:0px;line-height:14px;">П</div>
</div>
<div class="clip" style="left:522px;top:690px;width:90px;height:14px">
<div class="t sy" style="left:4.20px;top:0px;line-height:14px;letter-spacing:0.000px;">Договор подряда</div>
</div>
<div class="clip" style="left:613px;top:690px;width:86px;height:14px">
<div class="t sy" style="left:3.30px;top:0px;line-height:14px;letter-spacing:0.3px;">ЗЛ2/093</div>
</div>
<div class="clip" style="left:700px;top:690px;width:55px;height:14px">
<div class="t sy" style="left:4.40px;top:0px;line-height:14px;letter-spacing:-0.486px;">09-00-02</div>
</div>
<div class="clip" style="left:756px;top:690px;width:194px;height:14px">
<div class="t sy" style="left:2.20px;top:0px;line-height:14px;letter-spacing:0.15px;word-spacing:-1px;">[</div>
</div>
<div class="clip" style="left:756px;top:690px;width:194px;height:14px">
<div class="t sy" style="left:8.40px;top:0px;line-height:14px;letter-spacing:0.15px;word-spacing:-1px;">Проектирование прокладки линии г</div>
</div>
<div class="gl" style="left:90px;top:135px;width:1px;height:559px"></div>
<div class="gl" style="left:139px;top:135px;width:1px;height:559px"></div>
<div class="gl" style="left:191px;top:135px;width:1px;height:559px"></div>
<div class="gl" style="left:259px;top:135px;width:1px;height:559px"></div>
<div class="gl" style="left:382px;top:135px;width:1px;height:559px"></div>
<div class="gl" style="left:438px;top:135px;width:1px;height:559px"></div>
<div class="gl" style="left:502px;top:135px;width:1px;height:559px"></div>
<div class="gl" style="left:521px;top:135px;width:1px;height:559px"></div>
<div class="gl" style="left:612px;top:135px;width:1px;height:559px"></div>
<div class="gl" style="left:699px;top:135px;width:1px;height:559px"></div>
<div class="gl" style="left:755px;top:135px;width:1px;height:559px"></div>
<div class="bk" style="left:28px;top:135px;width:1px;height:559px"></div>
</div>
<div class="a dith" style="left:950px;top:120px;width:16px;height:575px"></div>
<div class="btn" style="left:950px;top:120px;width:16px;height:16px"></div>
<svg class="a" style="left:954px;top:126px;" width="7" height="4" viewBox="0 0 7 4" shape-rendering="crispEdges"><path d="M3 0H4V1H5V2H6V3H7V4H0V3H1V2H2V1H3Z" fill="#000"/></svg>
<div class="btn" style="left:950px;top:151px;width:16px;height:167px"></div>
<div class="btn" style="left:950px;top:679px;width:16px;height:16px"></div>
<svg class="a" style="left:954px;top:685px;" width="7" height="4" viewBox="0 0 7 4" shape-rendering="crispEdges"><path d="M0 0H7V1H6V2H5V3H4V4H3V3H2V2H1V1H0Z" fill="#000"/></svg>
<div class="a" style="left:950px;top:695px;width:16px;height:16px;background:#D4D0C8"></div>
<div class="a" style="left:10px;top:694px;width:414px;height:17px;background:#D4D0C8"></div>
<div class="t" style="left:14.30px;top:698px;line-height:13px;letter-spacing:0.183px;">Запись:</div>
<div class="a" style="left:60px;top:696px;width:20px;height:15px;background:#D4D0C8;border-style:solid;border-width:1px;border-color:#FFF #000 #000 #FFF"></div>
<div class="a" style="left:80px;top:696px;width:20px;height:15px;background:#D4D0C8;border-style:solid;border-width:1px;border-color:#FFF #000 #000 #FFF"></div>
<div class="a" style="left:172px;top:696px;width:20px;height:15px;background:#D4D0C8;border-style:solid;border-width:1px;border-color:#FFF #000 #000 #FFF"></div>
<div class="a" style="left:192px;top:696px;width:20px;height:15px;background:#D4D0C8;border-style:solid;border-width:1px;border-color:#FFF #000 #000 #FFF"></div>
<div class="a" style="left:212px;top:696px;width:20px;height:15px;background:#D4D0C8;border-style:solid;border-width:1px;border-color:#FFF #000 #000 #FFF"></div>
<div class="a" style="left:232px;top:696px;width:20px;height:15px;background:#D4D0C8;border-style:solid;border-width:1px;border-color:#FFF #000 #000 #FFF"></div>
<div class="a" style="left:252px;top:696px;width:20px;height:15px;background:#D4D0C8;border-style:solid;border-width:1px;border-color:#FFF #000 #000 #FFF"></div>
<div class="a" style="left:105px;top:696px;width:63px;height:15px;background:#FFF;border-style:solid;border-width:1px;border-color:#808080 #FFF #FFF #808080;box-shadow:inset 1px 1px 0 #404040"></div>
<div class="t" style="left:158.50px;top:698px;line-height:13px;">1</div>
<div class="t" style="left:276.50px;top:698px;line-height:13px;letter-spacing:0.100px;">из  82</div>
<svg class="a" style="left:65px;top:700px;" width="8" height="8" viewBox="0 0 8 8" shape-rendering="crispEdges"><rect x="0" y="0" width="2" height="7" fill="#000"/><path d="M7 0V7H6V6H5V5H4V4H3V3H4V2H5V1H6V0Z" fill="#000"/></svg>
<svg class="a" style="left:86px;top:700px;" width="6" height="9" viewBox="0 0 6 9" shape-rendering="crispEdges"><path d="M5 0V7H4V6H3V5H2V4H1V3H2V2H3V1H4V0Z" fill="#8C8C8C"/><path d="M5 1V8H6V0Z" fill="#FFF"/></svg>
<svg class="a" style="left:179px;top:700px;" width="5" height="8" viewBox="0 0 5 8" shape-rendering="crispEdges"><path d="M0 0V7H1V6H2V5H3V4H4V3H3V2H2V1H1V0Z" fill="#000"/></svg>
<svg class="a" style="left:197px;top:700px;" width="9" height="8" viewBox="0 0 9 8" shape-rendering="crispEdges"><path d="M0 0V7H1V6H2V5H3V4H4V3H3V2H2V1H1V0Z" fill="#000"/><rect x="6" y="0" width="2" height="7" fill="#000"/></svg>
<svg class="a" style="left:215px;top:699px;" width="14" height="10" viewBox="0 0 14 10" shape-rendering="crispEdges"><path d="M0 1V8H1V7H2V6H3V5H4V4H3V3H2V2H1V1Z" fill="#8C8C8C"/><path d="M1 9L5 5" stroke="#FFF"/><path d="M10 1V8M6.5 4.5H13.5M7.5 2L12.5 7M12.5 2L7.5 7" stroke="#FFF" stroke-width="1" shape-rendering="auto" transform="translate(0.6,0.6)"/><path d="M10 1V8M6.5 4.5H13.5M7.5 2L12.5 7M12.5 2L7.5 7" stroke="#8C8C8C" stroke-width="1" shape-rendering="auto"/></svg>
<svg class="a" style="left:235px;top:699px;" width="15" height="10" viewBox="0 0 15 10" shape-rendering="crispEdges"><path d="M3 0H11L14 3V6L11 9H3L0 6V3Z" fill="#8C8C8C" shape-rendering="auto"/><path d="M5 2.5L9 6.5M9 2.5L5 6.5" stroke="#FFF" stroke-width="1.6" shape-rendering="auto"/></svg>
<svg class="a" style="left:255px;top:699px;" width="14" height="10" viewBox="0 0 14 10" shape-rendering="crispEdges"><path d="M0 1V8H1V7H2V6H3V5H4V4H3V3H2V2H1V1Z" fill="#000"/><rect x="6" y="0" width="2" height="6" fill="#000"/><rect x="6" y="8" width="2" height="1" fill="#000"/><rect x="9" y="8" width="1" height="1" fill="#000"/><rect x="11" y="8" width="1" height="1" fill="#000"/></svg>
<div class="a dith" style="left:424px;top:695px;width:526px;height:16px"></div>
<div class="btn" style="left:424px;top:695px;width:16px;height:16px"></div>
<svg class="a" style="left:430px;top:699px;" width="4" height="7" viewBox="0 0 4 7" shape-rendering="crispEdges"><path d="M3 0H4V7H3V6H2V5H1V4H0V3H1V2H2V1H3Z" fill="#000"/></svg>
<div class="btn" style="left:440px;top:695px;width:226px;height:16px"></div>
<div class="btn" style="left:934px;top:695px;width:16px;height:16px"></div>
<svg class="a" style="left:940px;top:699px;" width="4" height="7" viewBox="0 0 4 7" shape-rendering="crispEdges"><path d="M0 0H1V1H2V2H3V3H4V4H3V5H2V6H1V7H0Z" fill="#000"/></svg>
<div class="a" style="left:9px;top:721px;width:741px;height:16px;border-style:solid;border-width:1px;border-color:#E6E4DE"></div>
<div class="t" style="left:10.80px;top:723px;line-height:13px;letter-spacing:0.100px;">Дата регистрации</div>
<div class="a" style="left:768px;top:721px;width:30px;height:16px;border-style:solid;border-width:1px;border-color:#E6E4DE"></div>
<div class="a" style="left:802px;top:721px;width:25px;height:16px;border-style:solid;border-width:1px;border-color:#E6E4DE"></div>
<div class="a" style="left:830px;top:721px;width:25px;height:16px;border-style:solid;border-width:1px;border-color:#E6E4DE"></div>
<div class="a" style="left:858px;top:721px;width:30px;height:16px;border-style:solid;border-width:1px;border-color:#E6E4DE"></div>
<div class="a" style="left:891px;top:721px;width:31px;height:16px;border-style:solid;border-width:1px;border-color:#E6E4DE"></div>
<div class="a" style="left:925px;top:721px;width:27px;height:16px;border-style:solid;border-width:1px;border-color:#E6E4DE"></div>
<div class="a" style="left:955px;top:721px;width:29px;height:16px;border-style:solid;border-width:1px;border-color:#E6E4DE"></div>
<div class="a" style="left:987px;top:721px;width:29px;height:16px;border-style:solid;border-width:1px;border-color:#E6E4DE"></div>
<div class="a" style="left:0;top:739px;width:1024px;height:29px;background:#D4D0C8;border-top:1px solid #D4D0C8;box-shadow:inset 0 1px 0 #FFF"></div>
<div class="btn" style="left:2px;top:742px;width:51px;height:22px"></div>
<div class="t" style="left:20.80px;top:747px;line-height:13px;font-weight:bold;letter-spacing:1.067px;">Пуск</div>
<svg class="a" style="left:135px;top:746px;" width="9" height="6" viewBox="0 0 9 6" shape-rendering="crispEdges"><path d="M0.8 0.5L3.6 3L0.8 5.5M4.8 0.5L7.6 3L4.8 5.5" stroke="#000" stroke-width="1.6" fill="none" shape-rendering="auto"/></svg>
<div class="btn" style="left:147px;top:742px;width:160px;height:22px"></div><div class="t" style="left:170.00px;top:747px;line-height:13px;letter-spacing:0.038px;">Norton AntiVirus Corpora...</div>
<div class="btn" style="left:310px;top:742px;width:160px;height:22px"></div><div class="t" style="left:333.40px;top:747px;line-height:13px;letter-spacing:0.207px;">Диплом бюджетирован...</div>
<div class="btn" style="left:474px;top:742px;width:159px;height:22px"></div><div class="t" style="left:495.25px;top:747px;line-height:13px;letter-spacing:0.224px;">Поиск и просмотр доку...</div>
<div class="a dith" style="left:636px;top:742px;width:160px;height:22px;border-style:solid;border-width:1px;border-color:#404040 #FFF #FFF #404040;box-shadow:inset 1px 1px 0 #808080"></div><div class="t" style="left:660.60px;top:747px;line-height:13px;font-weight:bold;letter-spacing:0.600px;">Счета</div>
<svg class="a" style="left:4px;top:745px;" width="16" height="14" viewBox="0 0 16 14" shape-rendering="crispEdges"><path d="M2 1.5Q4.5 0 7.5 1.5L6.5 6.5Q4 5 1 6.5Z" fill="#F05A20" shape-rendering="auto"/><path d="M8.5 1.8Q12 3 15 1.5L14 6.5Q11 8 7.5 6.7Z" fill="#7AC020" shape-rendering="auto"/><path d="M1 7.5Q4 6 6.3 7.5L5.3 12.5Q3 11 0 12.5Z" fill="#3070E0" shape-rendering="auto"/><path d="M7.3 7.7Q10.5 9 13.8 7.5L12.8 12.5Q9.5 14 6.3 12.7Z" fill="#F0C020" shape-rendering="auto"/></svg>
<svg class="a" style="left:61px;top:746px;" width="16" height="16" viewBox="0 0 16 16" shape-rendering="crispEdges"><rect x="0" y="0" width="16" height="16" fill="#808000"/><path d="M2 2H5V3H3V5H2ZM11 2H14V5H13V3H11ZM2 11H3V13H5V14H2ZM13 11H14V14H11V13H13Z" fill="#FFF"/><circle cx="8" cy="8" r="4.3" fill="none" stroke="#FFF" stroke-width="1.6" shape-rendering="auto"/><path d="M7.5 5V8.5H10.5" stroke="#FFF" stroke-width="1.4" fill="none"/></svg>
<svg class="a" style="left:83px;top:745px;" width="17" height="17" viewBox="0 0 17 17" shape-rendering="crispEdges"><circle cx="9" cy="9" r="6" fill="#1E88E0" shape-rendering="auto"/><path d="M2 14.5Q0 16 2 16.5Q5 17 10 13" stroke="#3AA0F0" stroke-width="1.4" fill="none" shape-rendering="auto"/><path d="M12 3Q15 0.5 16 2Q16.5 4 14 6" stroke="#3AA0F0" stroke-width="1.4" fill="none" shape-rendering="auto"/><path d="M5.5 9.3H12.5" stroke="#FFF" stroke-width="1.6"/><path d="M6 8.5Q6.5 5.8 9 5.8Q11.5 5.8 12 8.5" stroke="#FFF" stroke-width="1.6" fill="none" shape-rendering="auto"/><path d="M6 10.5Q6.8 12.8 9 12.8Q11 12.8 12 11.5" stroke="#FFF" stroke-width="1.6" fill="none" shape-rendering="auto"/><path d="M3.5 9Q3.5 4 8 3" stroke="#70C0FF" stroke-width="1" fill="none" shape-rendering="auto"/></svg>
<svg class="a" style="left:107px;top:746px;" width="16" height="16" viewBox="0 0 16 16" shape-rendering="crispEdges"><path d="M8 1A7 7 0 0 0 1 8H4A4 4 0 0 1 8 4Z" fill="#F04020" shape-rendering="auto"/><path d="M8 1A7 7 0 0 1 15 8H12A4 4 0 0 0 8 4Z" fill="#50A020" shape-rendering="auto"/><path d="M1 8A7 7 0 0 0 8 15V12A4 4 0 0 1 4 8Z" fill="#2060D0" shape-rendering="auto"/><path d="M15 8A7 7 0 0 1 8 15V12A4 4 0 0 0 12 8Z" fill="#F0C030" shape-rendering="auto"/><circle cx="8" cy="8" r="4" fill="#FFF" shape-rendering="auto"/><path d="M6.5 5.5L11 8L6.5 10.5Z" fill="#111" shape-rendering="auto"/></svg>
<svg class="a" style="left:152px;top:745px;" width="15" height="15" viewBox="0 0 15 15" shape-rendering="crispEdges"><path d="M7 0.5L13.5 7L9.5 11L4 13.5L0.5 13L1 8L3 5Z" fill="#E8E840" stroke="#606000" stroke-width="1" shape-rendering="auto"/><path d="M1.5 13L12 3" stroke="#FFF" stroke-width="1.2" shape-rendering="auto"/><circle cx="7" cy="6.5" r="1.8" fill="#0010F0" shape-rendering="auto"/></svg>
<svg class="a" style="left:313px;top:745px;" width="17" height="16" viewBox="0 0 17 16" shape-rendering="crispEdges"><defs><pattern id="bdot" width="2" height="2" patternUnits="userSpaceOnUse"><rect width="2" height="2" fill="#000"/><rect width="1" height="1" fill="#0000F0"/><rect x="1" y="1" width="1" height="1" fill="#0000F0"/></pattern></defs><path d="M4.5 0.5H13.5L16.5 3.5V15.5H4.5Z" fill="#F4F4F4" stroke="#000"/><path d="M13.5 0.5V3.5H16.5" stroke="#000" fill="#FFF"/><path d="M11 11.5H14M11 13.5H14" stroke="#999"/><rect x="0" y="2" width="11" height="11" fill="url(#bdot)"/><rect x="1" y="3" width="9" height="9" fill="#FFF"/><rect x="2" y="4" width="7" height="1" fill="#000"/><path d="M2.5 5.5L4 11L5.5 7L7 11L8.5 5.5" stroke="#000" stroke-width="1.5" fill="none" shape-rendering="auto"/></svg>
<svg class="a" style="left:478px;top:747px;" width="13" height="12" viewBox="0 0 13 12" shape-rendering="crispEdges"><defs><pattern id="fi2" width="2" height="2" patternUnits="userSpaceOnUse"><rect width="2" height="2" fill="#FFF"/><rect width="1" height="1" fill="#C8C8C8"/></pattern></defs><rect x="0" y="0" width="13" height="12" fill="#000"/><rect x="0" y="0" width="13" height="2" fill="#000080"/><rect x="1" y="2" width="11" height="9" fill="url(#fi2)"/><rect x="2" y="3" width="3" height="1" fill="#000"/><rect x="2" y="7" width="3" height="1" fill="#000"/><rect x="6.5" y="3.5" width="4" height="2" rx="0.8" fill="#FFF" stroke="#000" shape-rendering="auto"/><rect x="6.5" y="7.5" width="4" height="2" rx="0.8" fill="#FFF" stroke="#000" shape-rendering="auto"/></svg>
<svg class="a" style="left:642px;top:747px;" width="13" height="12" viewBox="0 0 13 12" shape-rendering="crispEdges"><defs><pattern id="fi3" width="2" height="2" patternUnits="userSpaceOnUse"><rect width="2" height="2" fill="#FFF"/><rect width="1" height="1" fill="#C8C8C8"/></pattern></defs><rect x="0" y="0" width="13" height="12" fill="#000"/><rect x="0" y="0" width="13" height="2" fill="#000080"/><rect x="1" y="2" width="11" height="9" fill="url(#fi3)"/><rect x="2" y="3" width="3" height="1" fill="#000"/><rect x="2" y="7" width="3" height="1" fill="#000"/><rect x="6.5" y="3.5" width="4" height="2" rx="0.8" fill="#FFF" stroke="#000" shape-rendering="auto"/><rect x="6.5" y="7.5" width="4" height="2" rx="0.8" fill="#FFF" stroke="#000" shape-rendering="auto"/></svg>
<div class="a" style="left:936px;top:746px;width:16px;height:16px;background:#0A246A"></div>
<div class="t" style="left:936.50px;top:748px;line-height:13px;color:#FFF;">EN</div>
<div class="sepw" style="left:956px;top:742px;height:23px"></div>
<div class="a" style="left:963px;top:742px;width:59px;height:24px;border-style:solid;border-width:1px;border-color:#808080 #FFF #FFF #808080"></div>
<svg class="a" style="left:968px;top:750px;" width="9" height="6" viewBox="0 0 9 6" shape-rendering="crispEdges"><path d="M3.6 0.5L0.8 3L3.6 5.5M7.6 0.5L4.8 3L7.6 5.5" stroke="#000" stroke-width="1.6" fill="none" shape-rendering="auto"/></svg>
<div class="t" style="left:985.00px;top:747px;line-height:13px;letter-spacing:0.250px;">18:23</div>
</body></html>
